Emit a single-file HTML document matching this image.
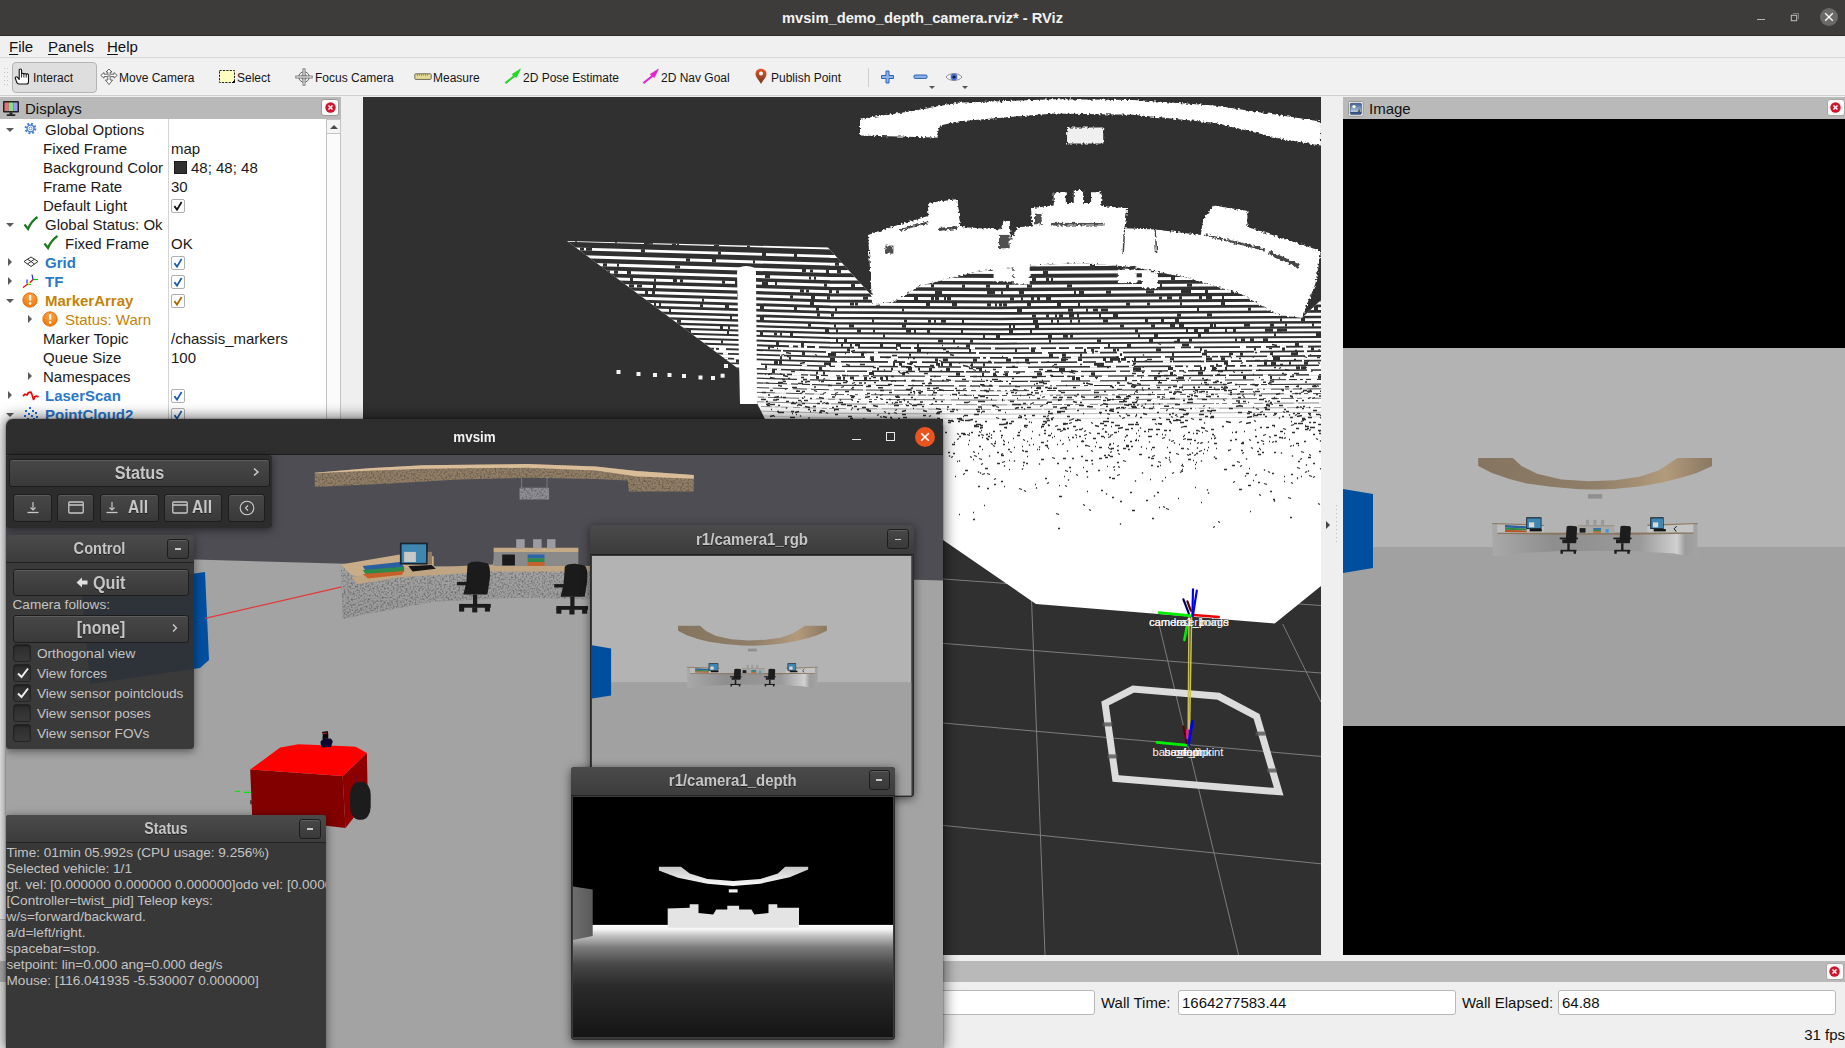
<!DOCTYPE html>
<html>
<head>
<meta charset="utf-8">
<title>mvsim_demo_depth_camera.rviz* - RViz</title>
<style>
html,body{margin:0;padding:0;}
body{width:1845px;height:1048px;overflow:hidden;position:relative;background:#efefef;font-family:"Liberation Sans",sans-serif;color:#1a1a1a;}
.abs{position:absolute;}
div,span{box-sizing:border-box;}
/* ---------- title bar ---------- */
#titlebar{left:0;top:0;width:1845px;height:36px;background:#3d3c3a;border-bottom:1px solid #2c2b29;}
#titlebar .t{left:0;width:1845px;top:10px;text-align:center;font-weight:bold;font-size:14.7px;color:#f2f2f2;line-height:17px;}
/* ---------- menu bar ---------- */
#menubar{left:0;top:36px;width:1845px;height:22px;background:#f0f0f0;border-bottom:1px solid #d9d9d9;}
#menubar span{position:absolute;top:1px;font-size:15px;line-height:19px;color:#111;}
#menubar u{text-decoration-thickness:1px;text-underline-offset:2px;}
/* ---------- toolbar ---------- */
#toolbar{left:0;top:59px;width:1845px;height:37px;background:#f1f1f1;border-bottom:1px solid #cfcfcf;}
.tb{position:absolute;top:12px;font-size:12px;line-height:14px;color:#161616;white-space:pre;}
.tbi{position:absolute;}
/* ---------- displays panel ---------- */
#disp-head{left:0;top:97px;width:341px;height:23px;background:#b9b9b9;}
#disp-tree{left:0;top:119px;width:341px;height:300px;background:#fff;overflow:hidden;}
.row{position:absolute;left:0;height:19px;font-size:15px;line-height:19px;white-space:pre;color:#1a1a1a;}
.row span{position:absolute;top:0;}
.blue{color:#2a78c9;font-weight:bold;}
.warn{color:#c4830a;}
.b{font-weight:bold;}
.cb{position:absolute;width:14px;height:14px;border:1px solid #b0b0b0;border-radius:2px;background:#fff;}
.arr-d{position:absolute;width:0;height:0;border-left:4px solid transparent;border-right:4px solid transparent;border-top:4px solid #5a5a5a;}
.arr-r{position:absolute;width:0;height:0;border-top:4px solid transparent;border-bottom:4px solid transparent;border-left:4px solid #5a5a5a;}
.fld{top:990px;height:25px;background:#fff;border:1px solid #b8b8b8;border-radius:3px;font-size:15px;line-height:23px;padding-left:3px;color:#111;white-space:pre;}
.tl{top:993px;font-size:15px;line-height:19px;color:#111;white-space:pre;}
.nb{font-weight:bold;color:#c6c6c6;white-space:pre;text-shadow:0 1px 0 rgba(0,0,0,0.5);}
.nt{font-size:13.600px;line-height:17px;color:#c4c4c4;white-space:pre;}
</style>
</head>
<body>
<!-- TITLE BAR -->
<div id="titlebar" class="abs">
  <div class="t abs">mvsim_demo_depth_camera.rviz* - RViz</div>
  <div class="abs" style="left:1757px;top:19px;width:8px;height:1px;background:#b4b4b4"></div>
  <svg class="abs" style="left:1790px;top:12px" width="10" height="10" viewBox="0 0 10 10"><path d="M3 1.500H8.500V7" fill="none" stroke="#8e8e8c" stroke-width="0.8"/><rect x="1.300" y="3.300" width="5.400" height="5.400" fill="none" stroke="#c0c0be" stroke-width="1"/></svg>
  <svg class="abs" style="left:1819px;top:7px" width="20" height="20" viewBox="0 0 20 20"><circle cx="10" cy="10" r="9" fill="#6b6a68"/><path d="M6.200 6.200L13.800 13.800M13.800 6.200L6.200 13.800" stroke="#fff" stroke-width="1.300"/></svg>
</div>
<!-- MENU BAR -->
<div id="menubar" class="abs">
  <span style="left:9px"><u>F</u>ile</span>
  <span style="left:48px"><u>P</u>anels</span>
  <span style="left:107px"><u>H</u>elp</span>
</div>
<!-- TOOLBAR -->
<div id="toolbar" class="abs">
  <!-- grip -->
  <svg class="tbi" style="left:3px;top:9px" width="6" height="18" viewBox="0 0 6 18"><g fill="#c4c4c4"><rect x="1" y="0" width="1" height="1"/><rect x="4" y="0" width="1" height="1"/><rect x="1" y="4" width="1" height="1"/><rect x="4" y="4" width="1" height="1"/><rect x="1" y="8" width="1" height="1"/><rect x="4" y="8" width="1" height="1"/><rect x="1" y="12" width="1" height="1"/><rect x="4" y="12" width="1" height="1"/><rect x="1" y="16" width="1" height="1"/><rect x="4" y="16" width="1" height="1"/></g></svg>
  <!-- interact button -->
  <div class="abs" style="left:12px;top:3px;width:85px;height:31px;background:#dedede;border:1px solid #b4b4b4;border-radius:4px;"></div>
  <svg class="tbi" style="left:14px;top:9px" width="18" height="18" viewBox="0 0 18 18"><path d="M5.2 9.5 V2.2 a1.2 1.2 0 0 1 2.4 0 V6.3 a1.1 1.1 0 0 1 2.3 0.2 a1.1 1.1 0 0 1 2.3 0.3 a1.1 1.1 0 0 1 2.3 0.4 V14 a2 2 0 0 1 -2 2 H5 a2.4 2.4 0 0 1 -2.2 -1.4 L1.3 10.3 a1.2 1.2 0 0 1 2 -1.2 L5.2 11.5 Z" fill="#fff" stroke="#111" stroke-width="1.1" stroke-linejoin="round"/><path d="M7.6 6.3V9.5M9.9 6.6V9.5M12.2 7V9.7" stroke="#111" stroke-width="0.9" fill="none"/></svg>
  <span class="tb" style="left:33px">Interact</span>
  <!-- move camera -->
  <svg class="tbi" style="left:100px;top:9px" width="18" height="18" viewBox="0 0 18 18"><g fill="#fff" stroke="#555" stroke-width="0.9" stroke-linejoin="round"><path d="M9 1 L12 4 H10.2 V6.2 H14 V4.6 L17.2 7.4 L14 10.2 V8.6 H10.2 V12 H12.6 L9 16.6 L5.4 12 H7.8 V8.6 H4 V10.2 L0.8 7.4 L4 4.6 V6.2 H7.8 V4 H6 Z"/></g><circle cx="9" cy="7.4" r="1.6" fill="#aaa"/></svg>
  <span class="tb" style="left:119px">Move Camera</span>
  <!-- select -->
  <svg class="tbi" style="left:218px;top:10px" width="18" height="16" viewBox="0 0 18 16"><rect x="1.5" y="1.5" width="15" height="12" fill="#ffffc0" stroke="#222" stroke-width="1" stroke-dasharray="2.2 1.2"/><path d="M16.5 11.5V13.5H14.5Z" fill="#000" stroke="#000" stroke-width="1"/></svg>
  <span class="tb" style="left:237px">Select</span>
  <!-- focus camera -->
  <svg class="tbi" style="left:295px;top:9px" width="18" height="18" viewBox="0 0 18 18"><g fill="none" stroke="#666" stroke-width="1"><circle cx="9" cy="9" r="5.2"/><circle cx="9" cy="9" r="2.6"/></g><g fill="#f4f4f4" stroke="#666" stroke-width="0.8"><rect x="8" y="0.8" width="2" height="16.4"/><rect x="0.8" y="8" width="16.4" height="2"/></g></svg>
  <span class="tb" style="left:315px">Focus Camera</span>
  <!-- measure -->
  <svg class="tbi" style="left:414px;top:14px" width="18" height="8" viewBox="0 0 18 8"><rect x="0.8" y="0.8" width="16.4" height="5.6" rx="1" fill="#e9dc9a" stroke="#6b6b5a" stroke-width="1"/><path d="M3.5 1.2v2M5.5 1.2v1.5M7.5 1.2v2M9.5 1.2v1.5M11.5 1.2v2M13.5 1.2v1.5" stroke="#7a744f" stroke-width="0.7"/></svg>
  <span class="tb" style="left:433px">Measure</span>
  <!-- 2d pose estimate -->
  <svg class="tbi" style="left:504px;top:9px" width="18" height="18" viewBox="0 0 18 18"><path d="M1 14.5 L9.5 7.8 L8.2 6.3 L16.5 1 L12.3 9.6 L11 8.6 L2 15.6 Z" fill="#1be31b" stroke="#14a814" stroke-width="0.5"/></svg>
  <span class="tb" style="left:523px">2D Pose Estimate</span>
  <!-- 2d nav goal -->
  <svg class="tbi" style="left:642px;top:9px" width="18" height="18" viewBox="0 0 18 18"><path d="M1 14.5 L9.5 7.8 L8.2 6.3 L16.5 1 L12.3 9.6 L11 8.6 L2 15.6 Z" fill="#f01ed8" stroke="#c012ac" stroke-width="0.5"/></svg>
  <span class="tb" style="left:661px">2D Nav Goal</span>
  <!-- publish point -->
  <svg class="tbi" style="left:754px;top:9px" width="14" height="17" viewBox="0 0 14 17"><defs><linearGradient id="pg" x1="0" y1="0" x2="0" y2="1"><stop offset="0" stop-color="#e5532b"/><stop offset="1" stop-color="#6e3a1c"/></linearGradient></defs><path d="M7 0.8 C3.6 0.8 1.5 3.2 1.5 6 C1.5 9.5 5.5 12.5 7 16 C8.5 12.5 12.5 9.5 12.5 6 C12.5 3.2 10.4 0.8 7 0.8 Z" fill="url(#pg)"/><circle cx="7" cy="5.6" r="2" fill="#fff"/></svg>
  <span class="tb" style="left:771px">Publish Point</span>
  <!-- separator -->
  <div class="abs" style="left:868px;top:9px;width:1px;height:19px;background:#cfcfcf;"></div>
  <!-- plus -->
  <svg class="tbi" style="left:880px;top:11px" width="15" height="14" viewBox="0 0 15 14"><path d="M6 1H9V5.5H13.5V8.5H9V13H6V8.5H1.5V5.500H6Z" fill="#8db2e6" stroke="#2f63b5" stroke-width="1" stroke-linejoin="round"/></svg>
  <!-- minus -->
  <svg class="tbi" style="left:913px;top:15px" width="15" height="6" viewBox="0 0 15 6"><rect x="1" y="1" width="13" height="3.4" rx="1" fill="#8db2e6" stroke="#2f63b5" stroke-width="1"/></svg>
  <div class="abs" style="left:929px;top:27px;width:0;height:0;border-left:3px solid transparent;border-right:3px solid transparent;border-top:3px solid #555;"></div>
  <!-- eye -->
  <svg class="tbi" style="left:945px;top:12px" width="18" height="12" viewBox="0 0 18 12"><path d="M1 6 C4 1.5 14 1.500 17 6 C14 10.5 4 10.5 1 6 Z" fill="#f6f6f6" stroke="#8a8a8a" stroke-width="1"/><circle cx="9" cy="6" r="3.4" fill="#4a6fd0"/><circle cx="9" cy="6" r="1.6" fill="#0f1c4d"/></svg>
  <div class="abs" style="left:962px;top:27px;width:0;height:0;border-left:3px solid transparent;border-right:3px solid transparent;border-top:3px solid #555;"></div>
</div>
<!-- DISPLAYS -->
<div id="disp-head" class="abs">
  <svg class="abs" style="left:2px;top:3px" width="18" height="17" viewBox="0 0 18 17"><rect x="1" y="1" width="16" height="11.500" rx="1" fill="#222"/><rect x="2.5" y="2.500" width="4.400" height="8.500" fill="#d77"/><rect x="6.900" y="2.500" width="4.300" height="8.500" fill="#8d8"/><rect x="11.200" y="2.500" width="4.300" height="8.500" fill="#99e"/><rect x="7.500" y="12.500" width="3" height="2" fill="#222"/><rect x="4.500" y="14.300" width="9" height="1.600" rx="0.8" fill="#222"/></svg>
  <div class="abs" style="left:25px;top:2px;font-size:15px;line-height:19px;color:#111">Displays</div>
  <div class="abs" style="left:321px;top:2px;width:18px;height:17px;background:#fafafa;border:1px solid #9a9a9a;border-radius:3px"></div>
  <svg class="abs" style="left:324.500px;top:5px" width="11" height="11" viewBox="0 0 11 11"><circle cx="5.500" cy="5.500" r="5.200" fill="#d0152a"/><path d="M3.500 3.500 L7.500 7.500 M7.500 3.500 L3.500 7.500" stroke="#fff" stroke-width="1.500"/></svg>
</div>
<div id="disp-tree" class="abs">
<div class="abs" style="left:168px;top:0;width:1px;height:300px;background:#d4d4d4"></div>
<div class="abs" style="left:326px;top:0;width:15px;height:300px;background:#fbfbfb;border-left:1px solid #c4c4c4;border-right:1px solid #c4c4c4"></div>
<div class="abs" style="left:326px;top:0;width:15px;height:15px;background:#f4f4f4;border:1px solid #c4c4c4"></div>
<div class="abs" style="left:329.500px;top:5.500px;width:0;height:0;border-left:4px solid transparent;border-right:4px solid transparent;border-bottom:4px solid #4a4a4a"></div>
<div class="arr-d" style="left:6px;top:9px"></div>
<svg class="abs" style="left:23px;top:2px" width="15" height="15" viewBox="0 0 15 15"><g fill="none" stroke="#4a82d4"><circle cx="7.5" cy="7.5" r="4.6" stroke-width="2.6" stroke-dasharray="1.8 1.81"/><circle cx="7.5" cy="7.5" r="3.4" stroke-width="1.3"/></g><circle cx="7.5" cy="7.5" r="1.5" fill="#fff" stroke="#4a82d4" stroke-width="0.8"/></svg>
<div class="row " style="left:45px;top:1px">Global Options</div>
<div class="row " style="left:43px;top:20px">Fixed Frame</div>
<div class="row " style="left:171px;top:20px">map</div>
<div class="row " style="left:43px;top:39px">Background Color</div>
<div class="abs" style="left:174px;top:42px;width:13px;height:13px;background:#303030;border:1px solid #1a1a1a"></div>
<div class="row " style="left:191px;top:39px">48; 48; 48</div>
<div class="row " style="left:43px;top:58px">Frame Rate</div>
<div class="row " style="left:171px;top:58px">30</div>
<div class="row " style="left:43px;top:77px">Default Light</div>
<div class="cb" style="left:171px;top:80px"><svg width="12" height="12" viewBox="0 0 11 11" style="position:absolute;left:0;top:0"><path d="M2.2 5.600 L4.6 8.8 L8.8 1.8" fill="none" stroke="#111" stroke-width="1.6"/></svg></div>
<div class="arr-d" style="left:6px;top:104px"></div>
<svg class="abs" style="left:23px;top:97px" width="16" height="15" viewBox="0 0 16 15"><path d="M1.5 8.5 L5 13 C7 8 10 4 14.5 1" fill="none" stroke="#1d7a1d" stroke-width="2.2"/></svg>
<div class="row " style="left:45px;top:96px">Global Status: Ok</div>
<svg class="abs" style="left:43px;top:116px" width="16" height="15" viewBox="0 0 16 15"><path d="M1.5 8.5 L5 13 C7 8 10 4 14.5 1" fill="none" stroke="#1d7a1d" stroke-width="2.2"/></svg>
<div class="row " style="left:65px;top:115px">Fixed Frame</div>
<div class="row " style="left:171px;top:115px">OK</div>
<div class="arr-r" style="left:8px;top:139px"></div>
<svg class="abs" style="left:23px;top:137px" width="16" height="12" viewBox="0 0 16 12"><g fill="none" stroke="#333" stroke-width="1"><path d="M8 1 L15 5.500 L8 10.5 L1 5.500 Z"/><path d="M4.5 3.2 L11.5 8 M11.5 3.2 L4.5 8"/></g></svg>
<div class="row blue" style="left:45px;top:134px">Grid</div>
<div class="cb" style="left:171px;top:137px"><svg width="12" height="12" viewBox="0 0 11 11" style="position:absolute;left:0;top:0"><path d="M2.2 5.600 L4.6 8.8 L8.8 1.8" fill="none" stroke="#1c5fa8" stroke-width="1.6"/></svg></div>
<div class="arr-r" style="left:8px;top:158px"></div>
<svg class="abs" style="left:22px;top:154px" width="18" height="16" viewBox="0 0 18 16"><g fill="none" stroke-width="1.2"><path d="M1 14.5 L6 11" stroke="#e00"/><path d="M6 11 L9 11.500" stroke="#0c0"/><path d="M5 6.500 L5 10.500" stroke="#22e"/><path d="M6 11 L8 9.500" stroke="#ee0"/><path d="M8 9.500 L11 6.500" stroke="#e00"/><path d="M11 6.500 L16 6.500" stroke="#0c0"/><path d="M11 6.500 L10 1.500" stroke="#22e"/></g></svg>
<div class="row blue" style="left:45px;top:153px">TF</div>
<div class="cb" style="left:171px;top:156px"><svg width="12" height="12" viewBox="0 0 11 11" style="position:absolute;left:0;top:0"><path d="M2.2 5.600 L4.6 8.8 L8.8 1.8" fill="none" stroke="#1c5fa8" stroke-width="1.6"/></svg></div>
<div class="arr-d" style="left:6px;top:180px"></div>
<svg class="abs" style="left:22px;top:173px" width="16" height="16" viewBox="0 0 16 16"><defs><radialGradient id="wg1" cx="0.5" cy="0.3" r="0.7"><stop offset="0" stop-color="#ffa64a"/><stop offset="1" stop-color="#ee7608"/></radialGradient></defs><circle cx="8" cy="8" r="7.2" fill="url(#wg1)" stroke="#d86a06" stroke-width="0.8"/><rect x="7" y="3" width="2.2" height="5.8" rx="1" fill="#fff"/><circle cx="8.1" cy="11.4" r="1.3" fill="#fff"/></svg>
<div class="row warn b" style="left:45px;top:172px">MarkerArray</div>
<div class="cb" style="left:171px;top:175px"><svg width="12" height="12" viewBox="0 0 11 11" style="position:absolute;left:0;top:0"><path d="M2.2 5.600 L4.6 8.8 L8.8 1.8" fill="none" stroke="#a86a00" stroke-width="1.6"/></svg></div>
<div class="arr-r" style="left:28px;top:196px"></div>
<svg class="abs" style="left:42px;top:192px" width="16" height="16" viewBox="0 0 16 16"><defs><radialGradient id="wg2" cx="0.5" cy="0.3" r="0.7"><stop offset="0" stop-color="#ffa64a"/><stop offset="1" stop-color="#ee7608"/></radialGradient></defs><circle cx="8" cy="8" r="7.2" fill="url(#wg2)" stroke="#d86a06" stroke-width="0.8"/><rect x="7" y="3" width="2.2" height="5.8" rx="1" fill="#fff"/><circle cx="8.1" cy="11.4" r="1.3" fill="#fff"/></svg>
<div class="row warn" style="left:65px;top:191px">Status: Warn</div>
<div class="row " style="left:43px;top:210px">Marker Topic</div>
<div class="row " style="left:171px;top:210px">/chassis_markers</div>
<div class="row " style="left:43px;top:229px">Queue Size</div>
<div class="row " style="left:171px;top:229px">100</div>
<div class="arr-r" style="left:28px;top:253px"></div>
<div class="row " style="left:43px;top:248px">Namespaces</div>
<div class="arr-r" style="left:8px;top:272px"></div>
<svg class="abs" style="left:22px;top:272px" width="18" height="10" viewBox="0 0 18 10"><path d="M1 5 L3 3.200 L5 4 L6.500 1.500 L9 1.200 L10.500 5 L11.500 8.500 L13 5.500 L14.500 5 L16.500 6" fill="none" stroke="#f00000" stroke-width="1.7" stroke-linejoin="round"/></svg>
<div class="row blue" style="left:45px;top:267px">LaserScan</div>
<div class="cb" style="left:171px;top:270px"><svg width="12" height="12" viewBox="0 0 11 11" style="position:absolute;left:0;top:0"><path d="M2.2 5.600 L4.6 8.8 L8.8 1.8" fill="none" stroke="#1c5fa8" stroke-width="1.6"/></svg></div>
<div class="arr-d" style="left:6px;top:294px"></div>
<svg class="abs" style="left:23px;top:288px" width="16" height="14" viewBox="0 0 16 14"><g fill="#1e6fe0"><rect x="6" y="0" width="2" height="2"/><rect x="2" y="3" width="2" height="2"/><rect x="9" y="3" width="2" height="2"/><rect x="12" y="5" width="2" height="2"/><rect x="5" y="6" width="2" height="2"/><rect x="1" y="8" width="2" height="2"/><rect x="8" y="8" width="2" height="2"/><rect x="13" y="9" width="2" height="2"/><rect x="4" y="11" width="2" height="2"/><rect x="10" y="11" width="2" height="2"/></g></svg>
<div class="row blue" style="left:45px;top:286px">PointCloud2</div>
<div class="cb" style="left:171px;top:289px"><svg width="12" height="12" viewBox="0 0 11 11" style="position:absolute;left:0;top:0"><path d="M2.2 5.600 L4.6 8.8 L8.8 1.8" fill="none" stroke="#1c5fa8" stroke-width="1.6"/></svg></div>
</div>
<!-- VIEW3D-START -->
<svg id="view3d" class="abs" style="left:363px;top:97px" width="958" height="858" viewBox="0 0 958 858">
<rect width="958" height="858" fill="#303030"/>
<g stroke="#7d7d7d" stroke-width="1" fill="none">
<path d="M580.0 482.0L958.0 508.5"/>
<path d="M580.0 546.4L958.0 576.0"/>
<path d="M580.0 626.0L958.0 659.4"/>
<path d="M580.0 728.4L958.0 766.8"/>
<path d="M668.4 499.0L682.0 858.0"/>
<path d="M795.4 525.0L875.6 858.0"/>
<path d="M919.7 527.0L958.0 605.0"/>
</g>
<defs><filter id="rough" x="-2%" y="-5%" width="104%" height="110%"><feTurbulence type="fractalNoise" baseFrequency="0.45" numOctaves="1" seed="4" result="n"/><feDisplacementMap in="SourceGraphic" in2="n" scale="5" xChannelSelector="R" yChannelSelector="G"/></filter></defs>
<defs><clipPath id="fclip"><polygon points="204.0,144.0 465.0,150.5 509.0,199.0 509.0,207.0 530.4,204.7 557.0,188.7 610.6,175.3 664.0,168.6 717.4,166.0 770.9,170.0 824.3,180.7 877.7,196.7 915.0,218.0 939.0,220.7 958.0,203.0 958.0,489.0 911.7,526.4 673.0,507.0 580.0,443.0 580.0,322.0 402.0,322.0 394.0,306.0 377.0,306.0 377.0,273.0"/></clipPath></defs>
<polygon points="204.0,144.0 465.0,150.5 509.0,199.0 509.0,207.0 530.4,204.7 557.0,188.7 610.6,175.3 664.0,168.6 717.4,166.0 770.9,170.0 824.3,180.7 877.7,196.7 915.0,218.0 939.0,220.7 958.0,203.0 958.0,489.0 911.7,526.4 673.0,507.0 580.0,443.0 580.0,322.0 402.0,322.0 394.0,306.0 377.0,306.0 377.0,273.0" fill="#fff"/>
<g clip-path="url(#fclip)" stroke="#303030" fill="none">
<path d="M197 147.3L467 155.3L637 156.3L962 154.3" stroke-width="5.44"/>
<path d="M197 155.2L467 163.2L637 164.2L962 162.2" stroke-width="4.88"/>
<path d="M197 162.8L467 170.8L637 171.8L962 169.8" stroke-width="4.36"/>
<path d="M197 170.1L467 178.1L637 179.1L962 177.1" stroke-width="3.97"/>
<path d="M197 177.0L467 185.0L637 186.0L962 184.0" stroke-width="3.70"/>
<path d="M197 183.5L467 191.5L637 192.5L962 190.5" stroke-width="3.45"/>
<path d="M197 189.9L467 197.9L637 198.9L962 196.9" stroke-width="3.22"/>
<path d="M197 195.9L467 203.9L637 204.9L962 202.9" stroke-width="3.01"/>
<path d="M197 201.8L467 209.8L637 210.8L962 208.8" stroke-width="2.84"/>
<path d="M197 207.4L467 215.4L637 216.4L962 214.4" stroke-width="2.69"/>
<path d="M197 212.9L467 220.9L637 221.9L962 219.9" stroke-width="2.55"/>
<path d="M197 218.2L467 226.2L637 227.2L962 225.2" stroke-width="2.41"/>
<path d="M197 223.3L467 231.3L637 232.3L962 230.3" stroke-width="2.28"/>
<path d="M197 228.2L467 236.2L637 237.2L962 235.2" stroke-width="2.16"/>
<path d="M197 233.0L467 241.0L637 242.0L962 240.0" stroke-width="2.02"/>
<path d="M197 237.7L467 245.7L637 246.7L962 244.7" stroke-width="1.94"/>
<path d="M197 242.5L467 250.5L637 251.5L962 249.5" stroke-width="1.86"/>
<path d="M197 247.2L467 255.2L637 256.2L962 254.2" stroke-width="1.78"/>
<path d="M197 251.9L467 259.9L637 260.9L962 258.9" stroke-width="1.70"/>
<path d="M197 256.6L467 264.6L637 265.6L962 263.6" stroke-width="1.63"/>
<path d="M197 261.3L467 269.3L637 270.3L962 268.3" stroke-width="1.55"/>
<path d="M197 266.0L467 274.0L637 275.0L962 273.0" stroke-width="1.43"/>
<path d="M197 270.7L467 278.7L637 279.7L962 277.7" stroke-width="1.31"/>
<path d="M197 275.4L467 283.4L637 284.4L962 282.4" stroke-width="1.19"/>
<path d="M197 280.1L467 288.1L637 289.1L962 287.1" stroke-width="1.07"/>
<path d="M197 284.8L467 292.8L637 293.8L962 291.8" stroke-width="0.96"/>
<path d="M197 289.5L467 297.5L637 298.5L962 296.5" stroke-width="0.84"/>
<path d="M197 294.2L467 302.2L637 303.2L962 301.2" stroke-width="0.72"/>
<path d="M197 298.9L467 306.9L637 307.9L962 305.9" stroke-width="0.60"/>
<path d="M197 303.5L467 311.5L637 312.5L962 310.5" stroke-width="0.48"/>
<path d="M197 308.2L467 316.2L637 317.2L962 315.2" stroke-width="0.34"/>
<path d="M197 312.9L467 320.9L637 321.9L962 319.9" stroke-width="0.18"/>
</g>
<path clip-path="url(#fclip)" d="M212 143.7h2M252 144.9h2M281 145.8h3M283 145.8h3M285 145.9h3M288 146.0h2M309 146.6h4M314 146.7h2M351 147.8h5M384 148.8h3M526 151.6h2M600 152.1h3M606 152.1h2M620 152.2h4M628 152.2h4M666 152.1h3M697 151.9h2M699 151.9h2M742 151.6h3M757 151.5h4M780 151.4h3M840 151.0h4M850 151.0h4M879 150.8h5M928 150.5h3M1077 149.6h2" stroke="#303030" stroke-width="3.2" fill="none"/>
<path clip-path="url(#fclip)" d="M217 152.0h4M223 152.2h3M225 152.2h4M278 153.8h4M355 156.1h3M399 157.4h4M431 158.3h3M498 159.6h5M522 159.7h4M524 159.7h4M563 160.0h5M626 160.3h2M644 160.4h4M645 160.3h3M652 160.3h2M654 160.3h4M659 160.3h2M678 160.1h5M681 160.1h3M710 159.9h5M773 159.6h5M785 159.5h3M802 159.4h5M918 158.7h2M926 158.6h2M935 158.6h3M968 158.4h2" stroke="#303030" stroke-width="3.2" fill="none"/>
<path clip-path="url(#fclip)" d="M197 159.2h3M214 159.7h3M323 162.9h4M349 163.7h4M390 164.9h2M472 167.2h4M546 167.6h4M564 167.7h3M568 167.8h4M571 167.8h2M579 167.8h2M594 167.9h2M594 167.9h2M598 167.9h3M599 167.9h5M633 168.1h2M643 168.1h3M659 168.0h2M727 167.6h5M750 167.5h3M753 167.4h2M768 167.4h2M831 167.0h2M832 167.0h5M859 166.8h2M887 166.6h2M914 166.5h5M985 166.0h4" stroke="#303030" stroke-width="3.2" fill="none"/>
<path clip-path="url(#fclip)" d="M208 166.9h3M214 167.1h4M240 167.8h4M254 168.2h2M312 170.0h5M379 171.9h4M439 173.7h4M447 174.0h3M463 174.4h2M464 174.5h2M474 174.6h4M583 175.2h3M680 175.3h5M788 174.6h3M796 174.6h2M804 174.5h2M838 174.3h5M902 173.9h3M939 173.7h4M942 173.7h4M1026 173.2h4" stroke="#303030" stroke-width="3.2" fill="none"/>
<path clip-path="url(#fclip)" d="M244 175.0h3M251 175.2h4M264 175.6h4M385 179.1h3M402 179.7h5M446 181.0h2M451 181.1h2M530 182.0h4M536 182.0h4M669 182.4h4M683 182.3h3M688 182.3h2M808 181.5h4M833 181.4h5M852 181.3h5M911 180.9h2M921 180.8h3M931 180.8h4M941 180.7h3M945 180.7h5M960 180.6h3" stroke="#303030" stroke-width="3.2" fill="none"/>
<path clip-path="url(#fclip)" d="M226 181.2h5M244 181.7h5M267 182.4h3M291 183.1h2M310 183.7h2M310 183.7h4M317 183.9h3M359 185.1h3M372 185.5h3M399 186.3h4M402 186.4h3M412 186.7h2M461 188.1h3M488 188.4h4M568 188.9h3M599 189.1h3M623 189.2h4M643 189.3h3M664 189.1h5M704 188.9h5M797 188.3h2M824 188.2h5M885 187.8h2M889 187.8h3M892 187.7h2M894 187.7h4M944 187.4h5M950 187.4h4M986 187.2h2" stroke="#303030" stroke-width="3.2" fill="none"/>
<path clip-path="url(#fclip)" d="M266 188.8h5M274 189.0h5M290 189.5h3M437 193.9h4M443 194.0h3M466 194.7h3M473 194.8h3M514 195.0h2M540 195.2h3M540 195.2h3M572 195.4h3M574 195.4h5M624 195.7h5M627 195.7h2M628 195.7h4M638 195.8h2M656 195.6h5M711 195.3h2M716 195.3h5M743 195.1h4M746 195.1h2M783 194.9h3M786 194.8h5M818 194.6h4M821 194.6h4M823 194.6h5M842 194.5h3M868 194.3h5M878 194.3h2M902 194.1h2M906 194.1h2M908 194.1h2M919 194.0h3M965 193.7h3" stroke="#303030" stroke-width="3.2" fill="none"/>
<path clip-path="url(#fclip)" d="M219 193.6h2M232 194.0h2M241 194.2h2M282 195.5h3M289 195.7h3M374 198.2h2M427 199.8h3M448 200.4h4M464 200.8h3M500 201.1h5M513 201.2h4M551 201.4h4M568 201.5h3M569 201.5h2M572 201.6h4M581 201.6h2M584 201.6h4M647 201.9h4M658 201.8h2M668 201.7h3M674 201.7h3M683 201.7h5M796 201.0h3M804 200.9h5M816 200.8h3M816 200.8h3M836 200.7h3M843 200.7h3M843 200.7h2M846 200.7h3M847 200.6h2M859 200.6h2M886 200.4h3M929 200.1h4M969 199.9h5" stroke="#303030" stroke-width="3.2" fill="none"/>
<path clip-path="url(#fclip)" d="M212 199.3h3M339 203.1h2M378 204.2h4M379 204.3h4M447 206.3h4M487 207.0h4M492 207.0h3M513 207.1h4M563 207.4h4M589 207.6h5M624 207.8h4M632 207.8h2M636 207.9h3M640 207.9h4M664 207.7h4M694 207.5h4M715 207.4h2M763 207.1h4M784 207.0h3M817 206.8h2M858 206.5h2M860 206.5h2M900 206.3h2M941 206.0h5M961 205.9h3" stroke="#303030" stroke-width="3.2" fill="none"/>
<path clip-path="url(#fclip)" d="M217 205.2h4M260 206.5h4M291 207.4h2M296 207.5h2M337 208.8h3M362 209.5h2M364 209.6h2M397 210.6h4M431 211.6h3M453 212.2h3M472 212.6h2M539 213.0h2M654 213.5h5M654 213.5h3M705 213.2h5M723 213.1h2M730 213.0h5M738 213.0h4M742 213.0h3M834 212.4h2M885 212.1h3M951 211.7h4M958 211.6h5" stroke="#303030" stroke-width="3.2" fill="none"/>
<path clip-path="url(#fclip)" d="M217 210.8h2M217 210.8h3M235 211.3h3M240 211.4h3M251 211.8h4M251 211.8h4M306 213.4h2M384 215.7h4M454 217.8h3M468 218.2h3M669 219.0h4M683 218.9h3M692 218.8h2M696 218.8h4M706 218.7h5M714 218.7h2M736 218.6h2M750 218.5h5M814 218.1h4M844 217.9h5M929 217.4h3M967 217.1h2" stroke="#303030" stroke-width="3.2" fill="none"/>
<path clip-path="url(#fclip)" d="M237 216.7h3M278 218.0h4M289 218.3h2M367 220.6h2M386 221.1h3M397 221.5h4M509 223.8h2M541 224.0h3M565 224.1h3M571 224.2h2M578 224.2h5M599 224.3h2M670 224.3h5M688 224.2h2M694 224.2h2M707 224.1h2M715 224.1h2M740 223.9h5M782 223.7h3M798 223.6h3M812 223.5h3M814 223.5h2M917 222.8h2M938 222.7h4M997 222.3h2" stroke="#303030" stroke-width="3.2" fill="none"/>
<path clip-path="url(#fclip)" d="M206 221.0h2M222 221.5h3M314 224.2h4M376 226.0h2M377 226.1h4M445 228.1h3M471 228.8h2M486 228.9h5M539 229.2h4M646 229.7h2M650 229.7h2M672 229.5h4M757 229.0h4M788 228.8h4M807 228.7h3M808 228.7h4M816 228.6h5M847 228.4h3M851 228.4h2M881 228.2h4M885 228.2h2M907 228.1h4M922 228.0h2M949 227.8h2M960 227.7h3" stroke="#303030" stroke-width="3.2" fill="none"/>
<path clip-path="url(#fclip)" d="M293 228.6h4M357 230.5h3M365 230.7h2M462 233.6h4M473 233.8h2M494 233.9h4M510 234.0h2M543 234.2h5M551 234.3h2M564 234.3h3M598 234.5h2M646 234.7h4M667 234.6h2M772 233.9h3M823 233.6h2M831 233.6h4M841 233.5h5M862 233.4h2M870 233.3h3M902 233.1h5M907 233.1h3M914 233.1h5M919 233.0h2M921 233.0h3M989 232.6h5" stroke="#303030" stroke-width="3.2" fill="none"/>
<path clip-path="url(#fclip)" d="M237 231.8h5M317 234.2h3M323 234.4h5M364 235.6h2M397 236.6h3M411 237.0h3M417 237.1h2M427 237.4h3M520 238.9h2M620 239.5h2M633 239.6h4M685 239.3h3M686 239.3h3M700 239.2h5M707 239.2h3M775 238.8h2M791 238.7h4M835 238.4h2M836 238.4h2M911 237.9h2M953 237.7h5M965 237.6h2" stroke="#303030" stroke-width="3.2" fill="none"/>
<path clip-path="url(#fclip)" d="M292 238.2h4M301 238.5h4M312 238.8h2M313 238.8h4M387 241.0h4M473 243.4h2M481 243.5h3M575 244.0h5M590 244.1h2M607 244.2h3M686 244.1h2M734 243.8h4M786 243.5h4M814 243.3h3M826 243.2h3M872 242.9h2M878 242.9h4M887 242.8h2M888 242.8h3M900 242.8h5M964 242.4h5" stroke="#303030" stroke-width="3.2" fill="none"/>
<path clip-path="url(#fclip)" d="M206 240.4h2M209 240.5h3M246 241.6h3M254 241.8h3M283 242.7h4M325 243.9h4M358 244.9h2M413 246.5h3M438 247.3h3M478 248.2h2M487 248.2h2M492 248.3h5M517 248.4h3M533 248.5h5M554 248.6h2M603 248.9h4M745 248.5h2M764 248.3h4M819 248.0h5M820 248.0h3M824 248.0h2M932 247.3h4M1012 246.8h3" stroke="#303030" stroke-width="3.2" fill="none"/>
<path clip-path="url(#fclip)" d="M272 244.7h4M283 245.0h5M392 248.2h2M426 249.2h4M435 249.5h3M441 249.7h3M452 250.0h4M491 250.6h3M492 250.6h3M534 250.9h3M548 250.9h3M607 251.3h4M610 251.3h2M628 251.4h4M666 251.3h2M673 251.2h5M693 251.1h3M706 251.0h6M720 250.9h4M737 250.8h4M812 250.4h6M828 250.3h3M877 250.0h3M877 250.0h6M898 249.9h5M917 249.7h6M940 249.6h3M941 249.6h4M979 249.4h6" stroke="#fff" stroke-width="2.5" fill="none"/>
<path clip-path="url(#fclip)" d="M200 244.9h4M214 245.3h3M218 245.5h2M241 246.1h5M244 246.2h3M293 247.7h5M300 247.9h2M386 250.4h5M405 251.0h2M484 252.9h3M554 253.4h4M606 253.7h2M652 253.7h2M668 253.7h4M721 253.3h2M728 253.3h3M750 253.1h3M754 253.1h2M793 252.9h5M794 252.9h3M837 252.6h2M891 252.3h2M919 252.1h3M948 251.9h3M965 251.8h4" stroke="#303030" stroke-width="3.2" fill="none"/>
<path clip-path="url(#fclip)" d="M216 247.7h5M236 248.3h4M237 248.4h4M260 249.0h3M309 250.5h5M329 251.1h3M351 251.7h2M356 251.9h4M359 252.0h4M383 252.7h2M418 253.7h2M463 255.1h5M487 255.3h2M511 255.4h4M613 256.0h3M679 255.9h6M724 255.6h5M731 255.6h6M754 255.5h6M838 254.9h3M891 254.6h6M893 254.6h3M941 254.3h3M1018 253.8h3" stroke="#fff" stroke-width="2.4" fill="none"/>
<path clip-path="url(#fclip)" d="M248 251.1h2M269 251.7h5M276 251.9h2M297 252.5h3M298 252.5h2M303 252.7h5M337 253.7h5M343 253.9h4M347 254.0h3M377 254.9h3M439 256.7h3M465 257.5h5M468 257.6h5M498 257.7h3M546 258.0h2M686 258.3h4M699 258.2h4M717 258.1h2M757 257.8h2M809 257.5h2M839 257.3h5M866 257.2h4M877 257.1h2M878 257.1h2M907 256.9h3M928 256.8h5M933 256.7h2M964 256.5h2" stroke="#303030" stroke-width="3.2" fill="none"/>
<path clip-path="url(#fclip)" d="M197 251.9h3M201 252.0h3M208 252.2h4M235 253.0h3M265 253.9h4M270 254.1h6M278 254.3h3M281 254.4h5M344 256.3h5M360 256.7h3M360 256.7h5M386 257.5h3M417 258.4h4M502 260.1h5M511 260.2h6M512 260.2h4M528 260.3h3M530 260.3h5M530 260.3h4M617 260.8h3M623 260.8h4M645 260.8h5M696 260.5h3M708 260.5h3M709 260.5h6M756 260.2h5M756 260.2h5M798 259.9h4M839 259.7h4M847 259.6h2M855 259.6h2M868 259.5h5M904 259.3h5M942 259.0h3M967 258.9h4" stroke="#fff" stroke-width="2.3" fill="none"/>
<path clip-path="url(#fclip)" d="M244 255.7h3M253 255.9h4M354 258.9h2M417 260.8h2M426 261.1h2M467 262.3h5M508 262.5h3M572 262.9h3M580 262.9h5M610 263.1h4M643 263.2h5M662 263.1h4M698 262.9h5M715 262.8h4M740 262.6h3M747 262.6h4M750 262.6h5M755 262.5h2M758 262.5h5M771 262.4h2M771 262.4h2M807 262.2h4M843 262.0h4M845 262.0h4M858 261.9h4M910 261.6h5M912 261.6h5M985 261.1h5" stroke="#303030" stroke-width="3.2" fill="none"/>
<path clip-path="url(#fclip)" d="M200 256.7h3M203 256.8h2M255 258.3h5M282 259.1h5M309 259.9h3M312 260.0h2M351 261.2h3M361 261.5h4M362 261.5h3M371 261.7h5M383 262.1h3M474 264.6h4M525 264.9h4M526 265.0h4M542 265.0h5M554 265.1h5M575 265.2h3M629 265.6h2M675 265.4h3M675 265.4h3M714 265.1h6M714 265.1h4M733 265.0h5M738 265.0h4M750 264.9h5M758 264.9h6M767 264.8h3M800 264.6h4M803 264.6h5M805 264.6h5M838 264.4h5M865 264.2h3M879 264.1h4M939 263.7h2M999 263.4h2" stroke="#fff" stroke-width="2.2" fill="none"/>
<path clip-path="url(#fclip)" d="M204 259.2h2M273 261.2h3M288 261.7h5M296 261.9h3M318 262.6h4M360 263.8h4M373 264.2h3M378 264.3h4M411 265.3h4M416 265.5h3M461 266.8h4M465 266.9h3M530 267.3h2M536 267.4h3M573 267.6h4M578 267.6h2M586 267.7h3M608 267.8h2M620 267.9h2M731 267.4h4M734 267.4h5M738 267.4h3M861 266.6h4M901 266.4h3M908 266.3h4M911 266.3h2M926 266.2h2M941 266.1h4M976 265.9h3" stroke="#303030" stroke-width="3.2" fill="none"/>
<path clip-path="url(#fclip)" d="M221 262.0h4M225 262.1h4M237 262.5h5M294 264.2h4M314 264.8h5M327 265.2h3M358 266.1h6M393 267.1h5M439 268.5h5M463 269.2h4M472 269.3h5M475 269.4h4M511 269.6h5M535 269.7h3M548 269.8h4M571 269.9h4M598 270.1h6M603 270.1h5M639 270.3h4M655 270.2h6M656 270.2h4M660 270.2h5M727 269.8h4M730 269.7h4M748 269.6h5M766 269.5h5M808 269.3h4M820 269.2h6M826 269.1h5M838 269.1h5M841 269.1h6M851 269.0h2M859 268.9h4M859 268.9h4M872 268.9h5M883 268.8h3M889 268.8h5M956 268.3h4M962 268.3h5" stroke="#fff" stroke-width="2.1" fill="none"/>
<path clip-path="url(#fclip)" d="M212 264.1h2M216 264.3h4M267 265.8h4M286 266.3h3M294 266.6h5M307 266.9h4M359 268.5h4M378 269.1h3M402 269.8h2M456 271.4h3M514 272.0h2M528 272.1h2M545 272.2h2M545 272.2h4M555 272.2h2M566 272.3h3M583 272.4h4M616 272.6h3M696 272.3h4M698 272.3h4M770 271.9h4M774 271.8h4M805 271.7h2M805 271.7h5M837 271.5h2M841 271.4h2M849 271.4h4M862 271.3h2M933 270.9h4M938 270.8h5M967 270.7h4" stroke="#303030" stroke-width="3.2" fill="none"/>
<path clip-path="url(#fclip)" d="M220 266.7h6M253 267.7h5M258 267.8h5M274 268.3h5M286 268.7h6M303 269.2h3M309 269.3h3M323 269.8h2M337 270.2h3M351 270.6h4M367 271.1h5M367 271.1h5M381 271.5h4M404 272.2h5M414 272.4h4M482 274.1h2M504 274.2h5M504 274.2h4M529 274.4h6M537 274.4h6M552 274.5h4M601 274.8h2M627 275.0h5M636 275.0h5M646 275.0h4M662 274.9h5M667 274.8h4M678 274.8h4M715 274.5h3M753 274.3h4M767 274.2h3M782 274.1h6M805 274.0h5M813 273.9h3M821 273.9h4M842 273.8h5M843 273.8h5M889 273.5h4M890 273.5h3M890 273.5h3M944 273.1h4M967 273.0h5" stroke="#fff" stroke-width="2.0" fill="none"/>
<path clip-path="url(#fclip)" d="M272 270.6h4M302 271.5h4M339 272.6h4M374 273.7h2M409 274.7h3M453 276.0h2M460 276.2h2M506 276.6h5M539 276.8h3M593 277.1h4M619 277.3h2M630 277.4h3M642 277.4h3M674 277.2h5M675 277.2h3M677 277.2h2M728 276.8h4M807 276.4h3M807 276.4h3M835 276.2h5M958 275.4h3M974 275.3h2" stroke="#303030" stroke-width="3.2" fill="none"/>
<path clip-path="url(#fclip)" d="M217 271.3h3M220 271.4h2M220 271.4h5M223 271.5h6M225 271.5h5M227 271.6h2M252 272.4h3M277 273.1h3M278 273.1h5M302 273.9h5M328 274.6h2M347 275.2h5M359 275.5h6M364 275.7h6M389 276.4h2M389 276.4h5M422 277.4h2M429 277.6h5M433 277.7h5M445 278.1h2M454 278.4h4M465 278.7h5M468 278.7h5M477 278.8h5M496 278.9h4M506 279.0h5M562 279.3h5M578 279.4h3M579 279.4h6M602 279.5h5M610 279.6h4M683 279.4h5M701 279.3h3M712 279.3h6M721 279.2h5M739 279.1h6M771 278.9h3M771 278.9h3M781 278.8h4M814 278.6h6M815 278.6h5M847 278.4h5M863 278.3h3M900 278.1h5M923 278.0h6M931 277.9h2M946 277.8h5M951 277.8h5M1002 277.5h3" stroke="#fff" stroke-width="1.9" fill="none"/>
<path clip-path="url(#fclip)" d="M227 274.0h4M247 274.6h2M256 274.9h4M306 276.3h3M309 276.4h4M356 277.8h2M384 278.7h5M453 280.7h3M474 281.2h4M480 281.2h2M487 281.2h4M501 281.3h3M517 281.4h3M523 281.4h2M709 281.7h3M713 281.6h4M762 281.3h2M791 281.2h3M815 281.0h2M816 281.0h5M880 280.6h3M907 280.5h2M955 280.2h3M1048 279.6h4" stroke="#303030" stroke-width="3.2" fill="none"/>
<path clip-path="url(#fclip)" d="M227 276.3h6M232 276.5h2M236 276.6h3M237 276.6h2M252 277.1h5M262 277.4h6M304 278.6h2M320 279.1h4M322 279.2h6M328 279.3h4M345 279.8h6M365 280.4h4M375 280.7h3M434 282.5h6M438 282.6h2M444 282.7h3M484 283.5h6M516 283.7h2M543 283.9h5M561 284.0h6M562 284.0h3M586 284.1h6M606 284.3h3M622 284.3h5M624 284.4h3M629 284.4h2M640 284.4h3M645 284.4h3M665 284.3h2M687 284.1h3M688 284.1h6M692 284.1h6M727 283.9h6M730 283.9h4M731 283.9h6M764 283.7h5M774 283.6h3M804 283.4h4M822 283.3h3M826 283.3h2M848 283.1h4M851 283.1h5M856 283.1h4M859 283.1h3M891 282.9h3M894 282.9h4M901 282.8h6M903 282.8h6M904 282.8h6M923 282.7h3M934 282.6h3M940 282.6h3M948 282.5h6M1057 281.9h6" stroke="#fff" stroke-width="1.8" fill="none"/>
<path clip-path="url(#fclip)" d="M200 277.9h3M274 280.1h2M317 281.4h3M442 285.1h2M496 286.0h3M501 286.0h2M559 286.4h3M566 286.4h3M646 286.8h2M673 286.6h2M680 286.6h4M720 286.3h2M723 286.3h2M754 286.1h3M764 286.0h2M795 285.8h4M850 285.5h4M857 285.5h2M900 285.2h3M942 284.9h2M996 284.6h3" stroke="#303030" stroke-width="1.5" fill="none"/>
<path clip-path="url(#fclip)" d="M226 281.0h5M236 281.3h2M274 282.4h4M306 283.4h3M309 283.5h5M316 283.7h3M324 283.9h4M324 283.9h4M333 284.2h4M335 284.2h5M361 285.0h5M367 285.2h5M375 285.4h5M376 285.4h5M424 286.9h4M435 287.2h4M447 287.5h2M500 288.3h3M503 288.3h2M508 288.4h5M508 288.4h2M527 288.5h3M527 288.5h4M541 288.6h4M560 288.7h2M591 288.9h5M592 288.9h2M603 288.9h4M608 289.0h2M616 289.0h3M630 289.1h5M632 289.1h4M654 289.0h3M681 288.9h6M689 288.8h4M717 288.6h4M725 288.6h6M749 288.4h3M753 288.4h3M762 288.4h6M787 288.2h6M814 288.0h5M814 288.0h4M864 287.7h6M868 287.7h4M884 287.6h3M896 287.5h2M904 287.5h4M905 287.5h3M959 287.2h5" stroke="#fff" stroke-width="1.7" fill="none"/>
<path clip-path="url(#fclip)" d="M289 285.2h4M345 286.9h5M417 289.0h2M451 290.0h2M489 290.6h2M515 290.8h5M548 291.0h2M573 291.1h3M673 291.3h3M685 291.2h4M690 291.2h4M794 290.5h3M805 290.5h3M830 290.3h2M835 290.3h2M846 290.2h3M858 290.2h2M861 290.1h3M922 289.8h4M950 289.6h4M958 289.5h4M978 289.4h3" stroke="#303030" stroke-width="1.5" fill="none"/>
<path clip-path="url(#fclip)" d="M210 285.2h4M215 285.4h3M219 285.5h4M226 285.7h4M226 285.7h3M253 286.5h3M265 286.8h4M269 287.0h6M274 287.1h5M277 287.2h2M305 288.0h4M306 288.1h4M314 288.3h5M316 288.3h3M360 289.7h5M363 289.7h3M369 289.9h5M382 290.3h5M406 291.0h4M425 291.6h5M444 292.2h4M466 292.8h5M500 293.0h3M529 293.2h2M549 293.3h4M558 293.4h6M570 293.4h4M591 293.6h5M604 293.6h4M613 293.7h4M631 293.8h3M638 293.8h4M644 293.8h3M666 293.6h5M675 293.6h4M678 293.6h3M680 293.6h4M693 293.5h2M728 293.3h3M754 293.1h5M798 292.8h3M806 292.8h6M806 292.8h2M817 292.7h4M853 292.5h5M863 292.4h6M874 292.4h4M890 292.3h4M896 292.2h4M902 292.2h6M918 292.1h4M919 292.1h3M926 292.0h4M938 292.0h6M984 291.7h4" stroke="#fff" stroke-width="1.6" fill="none"/>
<path clip-path="url(#fclip)" d="M217 287.8h4M407 293.4h3M433 294.2h4M439 294.4h3M570 295.8h4M595 296.0h2M672 296.0h4M731 295.6h5M806 295.2h3M811 295.1h3M836 295.0h3M843 294.9h2M877 294.7h4M892 294.6h5M927 294.4h2M945 294.3h4M957 294.2h4M958 294.2h3M1021 293.8h4" stroke="#303030" stroke-width="1.5" fill="none"/>
<path clip-path="url(#fclip)" d="M212 289.9h3M221 290.2h4M225 290.3h5M235 290.6h6M247 291.0h4M248 291.0h3M267 291.6h2M269 291.6h3M279 291.9h5M291 292.3h5M292 292.3h2M312 292.9h3M328 293.4h3M331 293.5h3M332 293.5h6M344 293.9h3M352 294.1h4M353 294.1h6M364 294.5h6M372 294.7h4M376 294.8h2M412 295.9h5M417 296.0h6M439 296.7h3M451 297.1h6M461 297.3h6M464 297.4h4M481 297.6h3M486 297.6h6M495 297.7h5M499 297.7h3M505 297.7h3M552 298.0h3M563 298.1h2M573 298.1h4M580 298.2h2M582 298.2h5M588 298.2h3M590 298.2h3M594 298.3h2M609 298.3h3M611 298.4h5M612 298.4h3M636 298.5h3M644 298.5h5M666 298.3h3M672 298.3h5M678 298.3h6M681 298.2h6M690 298.2h3M698 298.1h3M715 298.0h3M745 297.8h4M752 297.8h3M764 297.7h3M792 297.6h2M801 297.5h4M805 297.5h5M812 297.4h5M823 297.4h3M830 297.3h2M832 297.3h5M837 297.3h5M839 297.3h4M845 297.2h4M850 297.2h2M855 297.2h3M856 297.2h5M861 297.1h4M893 296.9h5M921 296.8h5M923 296.8h3M924 296.7h5M938 296.7h3M945 296.6h5M961 296.5h3" stroke="#fff" stroke-width="1.4" fill="none"/>
<path clip-path="url(#fclip)" d="M263 293.8h3M297 294.9h2M302 295.0h5M348 296.4h4M349 296.4h2M356 296.6h2M368 297.0h3M370 297.0h3M405 298.1h2M469 299.9h3M513 300.2h2M533 300.3h4M548 300.4h2M611 300.7h4M623 300.8h2M690 300.6h4M692 300.5h2M696 300.5h4M704 300.5h5M753 300.2h2M794 299.9h3M843 299.6h4M854 299.5h2M956 298.9h3M1050 298.3h4" stroke="#303030" stroke-width="1.5" fill="none"/>
<path clip-path="url(#fclip)" d="M214 294.7h5M227 295.1h4M227 295.1h5M235 295.3h4M268 296.3h3M286 296.8h2M302 297.3h5M306 297.4h4M350 298.7h5M360 299.0h3M361 299.1h3M368 299.3h3M373 299.4h3M388 299.9h5M392 300.0h3M401 300.2h4M436 301.3h3M441 301.4h6M443 301.5h4M448 301.6h5M458 301.9h5M460 302.0h5M472 302.2h4M490 302.3h5M492 302.3h3M498 302.4h3M498 302.4h3M501 302.4h5M509 302.4h2M514 302.5h4M520 302.5h3M521 302.5h2M582 302.9h5M583 302.9h5M634 303.2h4M635 303.2h4M642 303.2h3M652 303.1h2M684 302.9h5M697 302.8h6M711 302.7h3M714 302.7h3M714 302.7h5M738 302.6h3M740 302.6h5M764 302.4h6M767 302.4h5M789 302.3h5M794 302.2h3M817 302.1h3M822 302.1h4M828 302.0h5M832 302.0h2M842 301.9h5M864 301.8h5M894 301.6h6M903 301.6h4M905 301.5h3M916 301.5h2M931 301.4h3M939 301.3h6M940 301.3h2M947 301.3h3M964 301.2h2" stroke="#fff" stroke-width="1.3" fill="none"/>
<path clip-path="url(#fclip)" d="M263 298.5h4M318 300.1h3M330 300.5h4M356 301.3h3M371 301.7h3M410 302.9h4M494 304.7h2M506 304.8h3M536 305.0h3M544 305.0h2M557 305.1h3M684 305.3h5M756 304.8h5M873 304.1h4M933 303.7h2M973 303.5h4" stroke="#303030" stroke-width="1.5" fill="none"/>
<path clip-path="url(#fclip)" d="M201 299.0h4M238 300.1h4M251 300.5h3M256 300.6h6M257 300.6h3M270 301.0h4M272 301.1h5M277 301.2h4M284 301.4h4M294 301.7h4M295 301.8h3M322 302.6h4M324 302.6h5M327 302.7h2M337 303.0h3M345 303.2h4M348 303.3h4M349 303.4h4M360 303.7h2M366 303.9h2M374 304.1h5M383 304.4h5M401 304.9h2M457 306.6h5M459 306.6h5M465 306.8h3M504 307.1h4M522 307.2h3M540 307.3h2M544 307.3h3M544 307.3h4M547 307.3h3M562 307.4h4M589 307.6h4M614 307.7h4M644 307.8h5M646 307.8h5M651 307.8h5M665 307.7h5M667 307.7h3M683 307.6h6M699 307.5h2M710 307.4h2M720 307.4h5M721 307.3h6M735 307.3h3M737 307.2h4M760 307.1h4M761 307.1h2M762 307.1h5M765 307.1h4M769 307.1h5M775 307.0h3M800 306.9h4M815 306.8h5M851 306.5h2M856 306.5h3M864 306.5h5M884 306.3h2M886 306.3h5M900 306.2h4M908 306.2h3M931 306.1h4M956 305.9h4M957 305.9h3M960 305.9h6" stroke="#fff" stroke-width="1.2" fill="none"/>
<path clip-path="url(#fclip)" d="M229 302.2h2M236 302.4h3M259 303.1h4M277 303.6h3M277 303.6h4M292 304.1h2M315 304.7h5M316 304.8h2M357 306.0h2M369 306.3h3M380 306.6h3M407 307.5h5M584 309.9h2M615 310.1h4M690 309.9h4M726 309.7h4M743 309.6h2M801 309.2h5M903 308.6h4M916 308.5h4M965 308.2h3" stroke="#303030" stroke-width="1.5" fill="none"/>
<path clip-path="url(#fclip)" d="M209 303.9h3M218 304.2h4M219 304.2h3M223 304.3h6M231 304.5h3M234 304.6h3M239 304.8h3M239 304.8h5M246 305.0h4M256 305.3h3M258 305.3h2M262 305.5h3M277 305.9h4M309 306.9h3M339 307.7h4M340 307.8h3M350 308.1h6M355 308.2h5M362 308.4h5M362 308.4h4M389 309.2h3M392 309.3h2M395 309.4h3M409 309.8h3M415 310.0h3M425 310.3h5M437 310.7h3M453 311.1h6M464 311.4h2M483 311.6h6M488 311.7h3M490 311.7h4M514 311.8h5M544 312.0h3M548 312.0h5M561 312.1h4M574 312.2h3M575 312.2h4M575 312.2h5M580 312.2h4M590 312.3h3M598 312.3h2M628 312.5h4M679 312.3h2M690 312.2h5M694 312.2h2M696 312.2h3M713 312.1h2M733 311.9h4M742 311.9h4M751 311.8h5M762 311.8h3M777 311.7h3M792 311.6h5M809 311.5h3M826 311.4h6M833 311.3h3M842 311.3h6M844 311.3h2M851 311.2h5M868 311.1h3M921 310.8h3M938 310.7h2M938 310.7h3M939 310.7h4M948 310.6h3M981 310.4h3" stroke="#fff" stroke-width="1.1" fill="none"/>
<path clip-path="url(#fclip)" d="M811 244.5l5 0M795 246.5l3 1M909 247.5l5 1M579 248.5l1 0M406 249.5l5 1M594 250.5l2 -1M906 251.5l3 0M414 251.5l1 0M533 252.5l2 0M580 252.5l3 0M955 253.5l2 -1M841 253.5l3 0M932 253.5l2 0M583 254.5l3 0M488 254.5l4 -1M732 254.5l3 0M892 255.5l2 0M423 255.5l5 1M499 255.5l5 0M564 256.5l1 0M482 256.5l1 0M908 256.5l2 -1M452 257.5l2 1M780 257.5l1 1M587 257.5l4 1M947 258.5l1 -1M529 258.5l5 0M418 258.5l3 -1M639 259.5l1 0M424 259.5l2 0M890 259.5l1 1M941 259.5l3 1M523 260.5l3 0M752 260.5l3 -1M954 260.5l3 0M868 260.5l1 0M876 261.5l2 0M550 261.5l2 0M545 261.5l1 0M507 261.5l1 1M931 262.5l2 0M580 262.5l1 1M702 262.5l3 0M784 262.5l5 0M576 263.5l3 1M943 263.5l3 1M892 263.5l5 0M901 263.5l4 0M531 263.5l3 0M807 264.5l2 0M769 264.5l1 -1M837 264.5l4 0M625 264.5l3 0M781 264.5l3 -1M653 265.5l3 0M663 265.5l4 1M683 265.5l3 -1M955 265.5l2 1M596 265.5l1 1M546 266.5l4 0M437 266.5l5 -1M770 266.5l3 0M544 266.5l5 1M878 266.5l2 -1M717 267.5l2 0M917 267.5l3 0M691 267.5l3 0M853 267.5l2 0M483 267.5l4 1M497 267.5l5 0M600 268.5l5 1M466 268.5l2 0M607 268.5l2 0M769 268.5l3 -1M567 268.5l4 0M551 268.5l2 1M649 269.5l3 0M823 269.5l2 0M779 269.5l2 1M689 269.5l2 -1M605 269.5l2 1M539 269.5l3 0M543 270.5l3 0M569 270.5l3 0M911 270.5l2 0M546 270.5l3 0M692 270.5l3 0M510 270.5l3 0M744 270.5l2 0M608 271.5l1 0M941 271.5l3 -1M852 271.5l2 0M613 271.5l3 0M916 271.5l2 -1M606 271.5l4 0M437 272.5l5 1M610 272.5l3 1M676 272.5l4 0M457 272.5l3 1M922 272.5l4 1M630 272.5l3 0M896 272.5l3 1M684 273.5l5 0M773 273.5l4 0M622 273.5l1 0M708 273.5l5 1M829 273.5l1 0M521 273.5l1 -1M856 273.5l1 1M820 274.5l3 1M428 274.5l4 0M796 274.5l3 0M706 274.5l4 1M870 274.5l2 1M855 274.5l5 0M577 274.5l2 -1M948 274.5l2 -1M544 275.5l2 1M540 275.5l5 0M709 275.5l3 1M779 275.5l2 0M536 275.5l3 1M878 275.5l2 0M510 275.5l1 0M698 275.5l2 1M795 276.5l2 0M919 276.5l2 0M653 276.5l4 -1M769 276.5l4 0M402 276.5l1 1M931 276.5l5 0M417 276.5l2 1M561 276.5l4 0M729 277.5l3 1M921 277.5l3 0M890 277.5l1 0M640 277.5l4 0M424 277.5l5 0M854 277.5l3 0M405 277.5l4 -1M811 277.5l2 1M801 278.5l4 0M847 278.5l3 0M479 278.5l4 0M687 278.5l3 0M510 278.5l1 0M630 278.5l4 0M793 278.5l3 1M484 278.5l1 0M420 278.5l5 1M528 279.5l3 0M794 279.5l4 0M571 279.5l2 0M705 279.5l2 0M927 279.5l4 0M617 279.5l1 0M610 279.5l4 0M522 279.5l3 0M508 279.5l2 0M778 280.5l1 0M862 280.5l1 0M956 280.5l3 -1M438 280.5l3 0M407 280.5l5 1M896 280.5l1 0M669 280.5l5 0M732 280.5l3 0M510 280.5l3 0M826 281.5l2 -1M916 281.5l1 -1M733 281.5l1 0M506 281.5l2 0M425 281.5l2 0M649 281.5l2 0M813 281.5l2 0M839 281.5l2 0M803 281.5l3 0M460 282.5l2 -1M618 282.5l1 0M419 282.5l3 0M629 282.5l4 0M630 282.5l5 0M440 282.5l4 0M599 282.5l4 0M583 282.5l5 1M567 282.5l2 0M531 283.5l2 1M549 283.5l3 0M579 283.5l2 0M716 283.5l1 -1M541 283.5l2 0M623 283.5l2 0M907 283.5l4 -1M679 283.5l1 0M456 283.5l1 1M841 283.5l4 -1M814 284.5l1 0M483 284.5l2 0M635 284.5l3 -1M458 284.5l3 0M444 284.5l3 0M528 284.5l3 -1M796 284.5l1 0M438 284.5l2 0M420 284.5l3 0M854 284.5l2 0M852 284.5l3 -1M403 285.5l3 1M415 285.5l5 0M480 285.5l3 0M482 285.5l2 0M511 285.5l2 0M795 285.5l1 0M841 285.5l3 0M676 285.5l5 0M906 285.5l5 -1M754 285.5l2 0M838 286.5l1 0M724 286.5l5 1M774 286.5l4 1M473 286.5l5 0M905 286.5l4 1M864 286.5l5 -1M489 286.5l3 -1M565 286.5l3 -1M765 286.5l4 0M435 286.5l5 0M872 287.5l2 0M727 287.5l3 0M889 287.5l3 0M617 287.5l5 1M842 287.5l4 0M860 287.5l3 0M525 287.5l4 0M769 287.5l5 1M842 287.5l1 0M671 287.5l1 0M890 287.5l3 1M565 288.5l2 0M703 288.5l1 0M618 288.5l3 -1M415 288.5l2 0M954 288.5l2 1M626 288.5l3 0M465 288.5l4 0M608 288.5l2 1M549 288.5l2 0M491 288.5l2 -1M892 288.5l3 0M933 289.5l3 -1M503 289.5l5 0M616 289.5l1 0M876 289.5l1 0M652 289.5l5 0M810 289.5l4 0M949 289.5l4 -1M771 289.5l2 0M771 289.5l1 -1M747 289.5l3 0M934 289.5l2 0M768 289.5l4 1M851 290.5l1 1M674 290.5l4 0M429 290.5l5 0M710 290.5l3 0M818 290.5l2 -1M818 290.5l1 0M668 290.5l1 0M478 290.5l3 -1M682 290.5l3 0M816 290.5l4 0M749 290.5l2 0M831 290.5l1 1M626 291.5l1 1M674 291.5l4 0M785 291.5l2 0M488 291.5l3 1M860 291.5l5 -1M592 291.5l2 0M686 291.5l1 0M570 291.5l3 0M779 291.5l1 -1M564 291.5l3 0M937 291.5l2 0M571 291.5l3 0M918 292.5l3 0M779 292.5l2 1M576 292.5l5 1M547 292.5l2 -1M650 292.5l5 1M754 292.5l5 0M422 292.5l2 -1M661 292.5l3 1M819 292.5l2 1M600 292.5l3 -1M852 292.5l5 0M543 292.5l5 0M861 293.5l3 0M595 293.5l2 0M947 293.5l1 -1M451 293.5l3 1M865 293.5l4 0M919 293.5l2 0M940 293.5l4 0M832 293.5l3 0M621 293.5l3 0M593 293.5l2 0M695 293.5l3 1M773 293.5l2 0M517 293.5l4 0M434 294.5l1 -1M772 294.5l3 1M623 294.5l3 0M838 294.5l4 0M482 294.5l4 0M678 294.5l2 0M814 294.5l5 1M890 294.5l2 1M741 294.5l2 0M830 294.5l3 -1M550 294.5l2 0M570 294.5l2 -1M944 294.5l5 0M789 295.5l1 0M867 295.5l2 0M399 295.5l4 0M648 295.5l3 0M945 295.5l3 -1M731 295.5l1 0M699 295.5l3 0M668 295.5l2 0M938 295.5l3 -1M526 295.5l3 0M555 295.5l5 -1M698 295.5l1 0M834 295.5l1 -1M547 295.5l2 0M551 296.5l1 -1M460 296.5l3 -1M932 296.5l3 0M771 296.5l1 0M936 296.5l2 0M437 296.5l3 -1M472 296.5l3 -1M652 296.5l2 -1M504 296.5l3 0M556 296.5l2 0M810 296.5l3 0M643 296.5l2 0M831 296.5l2 -1M867 297.5l2 0M913 297.5l4 -1M801 297.5l1 0M512 297.5l1 -1M545 297.5l2 0M714 297.5l2 0M569 297.5l1 0M785 297.5l3 0M848 297.5l3 0M589 297.5l5 0M601 297.5l3 1M953 297.5l2 0M664 297.5l5 0M874 297.5l3 -1M615 298.5l2 0M765 298.5l2 0M927 298.5l3 1M831 298.5l4 1M487 298.5l5 1M472 298.5l1 0M517 298.5l3 -1M610 298.5l1 0M657 298.5l1 0M896 298.5l3 0M879 298.5l2 -1M711 298.5l3 1M828 298.5l2 0M534 298.5l2 1M891 298.5l1 -1M927 299.5l3 1M718 299.5l4 1M824 299.5l3 0M880 299.5l2 1M763 299.5l5 0M799 299.5l3 1M737 299.5l1 1M733 299.5l1 0M846 299.5l2 0M617 299.5l5 0M753 299.5l4 0M533 299.5l2 0M418 299.5l1 1M532 299.5l2 0M755 300.5l3 0M420 300.5l3 0M666 300.5l1 0M502 300.5l5 -1M488 300.5l3 0M456 300.5l5 1M911 300.5l1 0M875 300.5l3 0M679 300.5l3 -1M731 300.5l5 -1M441 300.5l1 -1M742 300.5l3 1M773 300.5l3 0M411 300.5l5 -1M654 301.5l1 0M774 301.5l1 -1M945 301.5l3 -1M595 301.5l1 0M807 301.5l5 0M447 301.5l2 0M570 301.5l2 0M674 301.5l3 0M828 301.5l1 0M439 301.5l1 -1M517 301.5l3 1M949 301.5l3 -1M761 301.5l5 0M909 301.5l5 0M799 301.5l1 0M639 302.5l1 0M744 302.5l2 1M540 302.5l2 0M839 302.5l5 0M413 302.5l3 0M488 302.5l2 1M825 302.5l5 0M551 302.5l2 0M628 302.5l1 0M526 302.5l2 0M398 302.5l5 0M896 302.5l5 0M695 302.5l1 0M860 302.5l2 1M749 302.5l2 0M939 303.5l2 0M695 303.5l4 -1M534 303.5l3 -1M784 303.5l4 0M760 303.5l2 0M821 303.5l1 0M639 303.5l1 0M740 303.5l3 0M784 303.5l4 0M820 303.5l2 0M541 303.5l1 0M785 303.5l2 0M744 303.5l4 -1M477 303.5l1 -1M435 303.5l3 0M441 303.5l4 0M438 304.5l1 0M710 304.5l4 1M761 304.5l3 0M914 304.5l3 0M902 304.5l2 0M618 304.5l4 0M647 304.5l4 0M880 304.5l3 0M578 304.5l2 0M615 304.5l5 0M457 304.5l2 0M773 304.5l2 -1M403 304.5l2 0M905 304.5l2 -1M572 304.5l2 0M423 304.5l3 0M429 305.5l2 0M717 305.5l2 0M433 305.5l1 0M875 305.5l2 0M601 305.5l4 0M475 305.5l5 0M605 305.5l2 -1M769 305.5l5 0M907 305.5l2 0M824 305.5l5 0M523 305.5l2 0M825 305.5l5 0M532 305.5l3 0M885 305.5l1 0M769 305.5l5 0M529 305.5l1 1M462 306.5l3 -1M796 306.5l1 1M463 306.5l3 0M907 306.5l3 1M431 306.5l2 0M546 306.5l3 1M531 306.5l2 -1M429 306.5l3 0M669 306.5l2 -1M740 306.5l5 1M459 306.5l3 -1M428 306.5l3 0M683 306.5l2 0M454 306.5l3 0M660 306.5l3 0M439 306.5l3 0M554 307.5l5 0M435 307.5l4 1M667 307.5l2 -1M403 307.5l4 -1M903 307.5l4 1M782 307.5l1 -1M761 307.5l5 1M770 307.5l2 0M478 307.5l5 0M812 307.5l5 0M765 307.5l4 0M790 307.5l1 -1M654 307.5l4 0M649 307.5l5 0M557 307.5l2 0M568 307.5l2 -1M434 308.5l1 0M404 308.5l3 0M434 308.5l2 -1M876 308.5l4 1M774 308.5l2 -1M905 308.5l2 1M510 308.5l5 1M549 308.5l5 0M415 308.5l2 0M629 308.5l4 0M716 308.5l5 0M531 308.5l5 0M484 308.5l5 0M737 308.5l3 -1M704 308.5l3 0M543 308.5l3 0M630 309.5l2 -1M473 309.5l2 0M491 309.5l3 0M442 309.5l5 1M840 309.5l2 -1M768 309.5l5 0M934 309.5l2 1M450 309.5l3 0M940 309.5l2 0M559 309.5l2 0M633 309.5l3 1M873 309.5l5 -1M724 309.5l3 0M677 309.5l3 -1M778 309.5l2 -1M937 309.5l2 1M901 310.5l3 1M499 310.5l4 0M758 310.5l3 0M933 310.5l2 0M790 310.5l1 -1M780 310.5l2 0M846 310.5l1 1M664 310.5l4 0M658 310.5l2 0M946 310.5l1 0M701 310.5l3 0M902 310.5l2 0M809 310.5l2 1M769 310.5l5 0M469 310.5l2 0M890 310.5l1 0M893 311.5l3 1M760 311.5l3 -1M652 311.5l2 -1M702 311.5l2 1M573 311.5l5 1M786 311.5l4 0M618 311.5l1 0M866 311.5l4 0M753 311.5l4 -1M939 311.5l2 0M827 311.5l2 0M489 311.5l1 -1M652 311.5l4 -1M423 311.5l1 -1M697 311.5l4 -1M550 311.5l1 0M445 312.5l2 0M494 312.5l2 0M902 312.5l5 0M408 312.5l1 0M921 312.5l2 0M661 312.5l1 -1M593 312.5l2 1M816 312.5l5 0M584 312.5l1 0M488 312.5l1 0M747 312.5l4 0M471 312.5l5 0M589 312.5l3 0M503 312.5l3 0M818 312.5l5 1M613 312.5l4 0M844 313.5l5 1M450 313.5l3 0M504 313.5l4 1M848 313.5l5 0M746 313.5l5 1M714 313.5l2 0M505 313.5l3 0M458 313.5l4 1M532 313.5l2 -1M635 313.5l3 0M803 313.5l1 0M803 313.5l2 -1M560 313.5l4 1M742 313.5l2 0M950 313.5l4 0M471 313.5l1 0M587 314.5l4 0M619 314.5l3 0M428 314.5l3 0M447 314.5l1 0M685 314.5l2 0M920 314.5l2 1M414 314.5l2 0M837 314.5l4 -1M885 314.5l4 1M694 314.5l5 0M457 314.5l1 -1M614 314.5l3 0M539 314.5l4 -1M521 314.5l2 1M923 314.5l3 0M697 314.5l5 0M456 315.5l3 0M754 315.5l2 0M418 315.5l3 0M432 315.5l4 -1M417 315.5l4 0M875 315.5l4 0M642 315.5l1 0M618 315.5l1 0M415 315.5l5 0M694 315.5l4 0M574 315.5l5 -1M736 315.5l3 0M531 315.5l3 1M794 315.5l2 0M897 315.5l3 -1M463 315.5l2 1M934 316.5l3 0M823 316.5l3 0M809 316.5l2 0M911 316.5l3 0M884 316.5l3 0M847 316.5l1 0M685 316.5l5 0M945 316.5l3 0M573 316.5l4 0M780 316.5l4 1M429 316.5l1 0M720 316.5l1 0M737 316.5l1 0M525 316.5l2 0M930 316.5l2 0M744 316.5l3 1M926 317.5l1 1M821 317.5l5 -1M821 317.5l2 0M953 317.5l4 0M820 317.5l5 0M539 317.5l4 0M611 317.5l5 0M472 317.5l3 0M773 317.5l1 0M900 317.5l2 0M890 317.5l2 -1M763 317.5l1 -1M946 317.5l2 1M836 317.5l5 0M806 317.5l2 0M433 317.5l1 0M894 317.5l5 0M437 318.5l1 1M813 318.5l2 1M756 318.5l2 1M932 318.5l2 -1M661 318.5l2 0M812 318.5l2 -1M910 318.5l3 -1M957 318.5l3 0M669 318.5l3 0M891 318.5l4 0M514 318.5l2 -1M601 318.5l4 0M764 318.5l3 0M656 318.5l3 1M410 318.5l2 1M957 318.5l2 -1M560 318.5l3 0M842 319.5l3 0M520 319.5l4 1M485 319.5l4 0M919 319.5l2 0M566 319.5l2 -1M808 319.5l2 1M704 319.5l3 0M772 319.5l2 -1M934 319.5l5 -1M902 319.5l2 0M407 319.5l4 -1M890 319.5l1 -1M600 319.5l1 0M680 319.5l3 0M684 319.5l2 -1M517 319.5l2 1M848 319.5l3 0M542 320.5l2 0M633 320.5l3 1M427 320.5l5 0M847 320.5l4 0M817 320.5l2 -1M540 320.5l3 0M527 320.5l2 0M945 320.5l4 0M817 320.5l4 -1M796 320.5l2 1M916 320.5l1 1M927 320.5l3 0M884 320.5l5 -1M777 320.5l2 0M655 320.5l4 0M957 320.5l2 1M535 321.5l2 0M487 321.5l3 0M744 321.5l2 0M488 321.5l2 1M445 321.5l2 -1M574 321.5l3 0M500 321.5l3 1M828 321.5l3 1M662 321.5l2 1M688 321.5l3 -1M683 321.5l3 0M528 321.5l2 1M939 321.5l3 0M596 321.5l3 0M594 321.5l4 1M759 321.5l3 -1M596 322.5l5 1M714 322.5l4 1M940 322.5l3 0M639 322.5l4 0M939 322.5l2 0M836 322.5l3 0M803 322.5l4 0M709 322.5l2 -1M789 322.5l4 0M688 322.5l2 0M813 322.5l5 1M684 323.5l3 0M712 323.5l3 0M822 323.5l3 0M706 323.5l3 -1M810 323.5l5 0M586 323.5l5 1M605 323.5l5 -1M585 323.5l2 0M891 323.5l2 1M588 323.5l2 0M602 323.5l5 0M666 324.5l1 1M680 324.5l4 0M938 324.5l3 -1M928 324.5l1 0M744 324.5l2 0M863 324.5l5 1M740 324.5l4 0M806 324.5l2 0M612 324.5l2 0M595 324.5l2 0M622 324.5l2 0M648 324.5l3 0M946 325.5l2 0M950 325.5l3 0M728 325.5l2 1M668 325.5l1 0M643 325.5l2 0M817 325.5l4 0M748 325.5l3 0M876 325.5l3 -1M585 325.5l3 0M807 325.5l2 1M773 325.5l2 0M792 326.5l2 1M646 326.5l3 0M841 326.5l1 -1M883 326.5l5 -1M935 326.5l5 0M737 326.5l4 0M795 326.5l4 1M706 326.5l3 -1M931 326.5l3 0M700 326.5l3 0M682 326.5l2 -1M955 327.5l4 0M700 327.5l5 -1M679 327.5l3 0M640 327.5l5 -1M765 327.5l2 0M766 327.5l5 0M636 327.5l5 0M797 327.5l2 -1M772 327.5l4 0M613 327.5l5 0M685 328.5l1 -1M909 328.5l3 0M611 328.5l3 0M617 328.5l3 0M661 328.5l4 0M685 328.5l2 0M928 328.5l3 -1M741 328.5l3 0M752 328.5l5 0M732 328.5l4 1M942 328.5l1 0M692 329.5l3 -1M859 329.5l2 0M821 329.5l3 0M678 329.5l3 0M748 329.5l1 0M611 329.5l5 0M661 329.5l3 1M911 329.5l1 0M710 329.5l3 0M942 329.5l4 0M897 330.5l2 0M642 330.5l2 1M904 330.5l2 0M678 330.5l1 0M641 330.5l3 0M947 330.5l5 0M818 330.5l3 -1M903 330.5l3 0M617 330.5l3 0M838 330.5l4 1M755 331.5l5 -1M944 331.5l2 0M777 331.5l1 -1M700 331.5l2 0M920 331.5l3 1M933 331.5l3 0M617 331.5l3 -1M704 331.5l2 0M719 331.5l1 0M768 331.5l2 0M787 332.5l2 0M700 332.5l3 0M942 332.5l3 0M793 332.5l4 0M762 332.5l4 0M785 332.5l5 0M716 332.5l3 0M694 332.5l4 0M848 332.5l3 0M739 332.5l2 -1M775 333.5l1 0M833 333.5l2 0M955 333.5l3 0M681 333.5l2 0M946 333.5l2 -1M842 333.5l3 1M712 333.5l3 -1M892 333.5l1 -1M657 333.5l1 0M618 333.5l1 0M801 333.5l3 0M835 333.5l2 1M955 333.5l1 0M806 333.5l2 0M917 334.5l3 0M742 334.5l1 0M956 334.5l2 -1M781 334.5l2 0M721 334.5l2 -1M630 334.5l2 0M785 334.5l1 0M637 334.5l1 -1M881 334.5l1 0M697 334.5l3 -1M616 334.5l2 1M755 334.5l1 0M669 334.5l1 0M582 335.5l2 0M872 335.5l2 -1M726 335.5l2 1M869 335.5l1 0M751 335.5l3 0M929 335.5l3 0M655 335.5l2 0M873 335.5l1 0M825 335.5l2 0M608 335.5l2 0M839 335.5l1 0M743 335.5l1 -1M742 335.5l1 -1M626 336.5l1 0M688 336.5l1 0M598 336.5l3 0M773 336.5l1 0M833 336.5l2 0M830 336.5l1 0M921 336.5l1 0M830 336.5l1 0M734 336.5l3 0M956 336.5l2 0M681 336.5l2 0M594 336.5l2 1M606 336.5l1 0M601 336.5l1 0M618 337.5l3 1M676 337.5l1 1M793 337.5l2 0M604 337.5l3 1M628 337.5l1 1M745 337.5l1 0M799 337.5l1 0M623 337.5l2 0M600 337.5l3 0M712 337.5l2 1M849 337.5l2 0M950 337.5l2 0M615 338.5l2 0M821 338.5l1 0M851 338.5l1 1M615 338.5l1 0M638 338.5l2 0M911 338.5l3 0M900 338.5l3 -1M747 338.5l3 -1M654 338.5l3 0M763 338.5l2 0M721 338.5l3 -1M802 338.5l1 -1M685 338.5l3 0M738 339.5l3 0M596 339.5l2 0M625 339.5l2 0M776 339.5l1 -1M785 339.5l3 0M691 339.5l1 0M762 339.5l1 1M906 339.5l2 1M716 339.5l2 0M892 339.5l2 0M820 339.5l1 0M787 339.5l2 0M745 340.5l3 -1M916 340.5l2 0M709 340.5l2 0M852 340.5l1 1M619 340.5l1 0M919 340.5l1 0M918 340.5l2 1M689 340.5l1 0M638 340.5l1 0M713 340.5l1 0M705 340.5l1 0M741 340.5l1 0M722 341.5l1 0M921 341.5l2 -1M730 341.5l3 0M953 341.5l2 1M650 341.5l1 0M623 341.5l2 0M628 341.5l1 -1M851 341.5l1 0M799 341.5l3 -1M668 341.5l1 0M848 341.5l1 0M872 342.5l2 0M594 342.5l2 -1M824 342.5l3 0M773 342.5l1 0M660 342.5l2 1M926 342.5l1 0M624 342.5l2 0M827 342.5l2 0M706 342.5l1 1M820 342.5l3 -1M886 342.5l2 1M761 343.5l1 0M831 343.5l2 0M806 343.5l1 -1M898 343.5l3 1M640 343.5l1 0M867 343.5l2 0M697 343.5l1 0M606 343.5l1 0M719 343.5l2 1M772 343.5l2 0M775 343.5l1 0M767 344.5l2 0M906 344.5l1 0M912 344.5l2 0M808 344.5l3 -1M684 344.5l1 -1M941 344.5l2 0M718 344.5l3 0M632 344.5l1 0M641 344.5l1 0M664 344.5l1 0M957 344.5l1 -1M733 345.5l1 0M879 345.5l2 0M894 345.5l2 0M591 345.5l1 0M838 345.5l1 1M786 345.5l1 -1M645 345.5l1 0M678 345.5l3 0M845 345.5l1 -1M909 345.5l2 -1M851 346.5l3 0M631 346.5l2 0M837 346.5l3 -1M878 346.5l3 0M834 346.5l2 -1M628 346.5l2 1M750 346.5l1 0M827 346.5l1 0M811 346.5l1 -1M933 346.5l3 0M900 347.5l1 -1M589 347.5l3 0M746 347.5l2 -1M670 347.5l1 0M699 347.5l2 -1M590 347.5l2 0M605 347.5l1 0M816 347.5l1 0M640 347.5l2 0M694 347.5l1 0M746 348.5l2 -1M930 348.5l1 0M666 348.5l1 -1M763 348.5l3 0M724 348.5l3 1M722 348.5l2 0M935 348.5l1 0M682 348.5l3 0M630 348.5l2 1M616 349.5l2 0M754 349.5l2 -1M763 349.5l3 0M732 349.5l1 0M768 349.5l2 0M778 349.5l1 1M927 349.5l2 -1M659 349.5l1 0M714 349.5l1 0M684 349.5l1 1M804 350.5l1 0M745 350.5l1 0M676 350.5l1 -1M789 350.5l3 0M845 350.5l1 0M834 350.5l1 1M888 350.5l2 1M651 350.5l1 0M736 350.5l3 0M824 351.5l2 1M685 351.5l1 0M853 351.5l1 0M760 351.5l3 0M746 351.5l3 1M896 351.5l1 0M748 351.5l3 0M783 351.5l1 0M818 351.5l3 0M645 352.5l2 0M619 352.5l1 0M841 352.5l1 0M788 352.5l1 0M897 352.5l1 0M674 352.5l1 0M676 352.5l1 0M765 352.5l2 0M754 353.5l2 0M878 353.5l2 0M865 353.5l1 0M704 353.5l1 1M844 353.5l1 0M659 353.5l1 0M866 353.5l2 -1M728 353.5l2 1M938 354.5l3 1M836 354.5l3 -1M894 354.5l2 0M647 354.5l2 1M660 354.5l1 -1M662 354.5l3 0M956 354.5l3 0M610 354.5l2 1M585 355.5l2 0M899 355.5l2 0M911 355.5l2 0M634 355.5l2 0M829 355.5l1 1M747 355.5l2 -1M806 355.5l2 0M833 356.5l2 0M879 356.5l2 -1M840 356.5l1 0M615 356.5l1 0M590 356.5l2 0M813 356.5l3 1M918 356.5l1 -1M755 356.5l2 1M745 357.5l1 1M946 357.5l2 1M824 357.5l2 1M776 357.5l3 0M895 357.5l3 0M826 357.5l2 0M638 357.5l2 -1M638 358.5l3 0M741 358.5l2 0M626 358.5l1 1M611 358.5l3 1M831 358.5l2 -1M746 358.5l1 0M929 358.5l1 1M851 359.5l1 1M718 359.5l2 0M586 359.5l1 -1M664 359.5l1 0M789 359.5l3 -1M607 359.5l2 1M747 359.5l3 0M945 360.5l3 0M785 360.5l2 0M806 360.5l1 0M742 360.5l3 0M802 360.5l2 1M689 360.5l3 1M588 360.5l2 -1M788 361.5l3 0M616 361.5l3 1M709 361.5l2 0M700 361.5l3 0M852 361.5l2 0M736 361.5l3 0M806 362.5l1 1M937 362.5l2 -1M883 362.5l1 -1M825 362.5l3 0M610 362.5l1 0M678 362.5l3 0M646 363.5l1 0M830 363.5l1 0M760 363.5l3 1M596 363.5l1 1M728 363.5l2 0M722 363.5l3 0M795 364.5l3 1M651 364.5l1 -1M874 364.5l3 1M594 364.5l1 0M838 364.5l1 -1M935 364.5l2 0M754 365.5l2 0M807 365.5l1 -1M833 365.5l1 0M639 365.5l3 -1M660 365.5l2 0M634 366.5l3 0M950 366.5l2 0M694 366.5l2 0M729 366.5l1 1M663 366.5l2 0M819 367.5l1 0M943 367.5l1 1M676 367.5l1 -1M618 367.5l2 -1M832 367.5l1 0M660 368.5l1 0M797 368.5l1 0M869 368.5l3 0M818 368.5l3 1M788 368.5l2 0M755 369.5l2 1M641 369.5l1 -1M877 369.5l2 -1M744 369.5l1 0M794 369.5l2 0M720 370.5l1 0M706 370.5l2 0M934 370.5l3 1M750 370.5l2 -1M622 371.5l3 0M886 371.5l1 0M659 371.5l1 1M832 371.5l1 0M957 371.5l2 1M819 372.5l1 0M646 372.5l1 0M751 372.5l1 1M861 372.5l3 0M901 373.5l1 -1M735 373.5l2 0M818 373.5l2 1M602 373.5l3 0M702 373.5l3 1M707 374.5l1 0M615 374.5l1 1M905 374.5l2 1M945 374.5l1 -1M723 374.5l2 0M817 375.5l2 -1M942 375.5l2 -1M779 375.5l1 1M617 375.5l1 1M883 376.5l3 0M624 376.5l3 1M909 376.5l2 0M809 376.5l2 -1M928 377.5l2 0M713 377.5l2 1M619 377.5l3 -1M600 377.5l2 -1M892 378.5l2 -1M882 378.5l1 1M754 378.5l3 -1M946 378.5l3 1M921 379.5l1 0M938 379.5l1 0M701 379.5l1 0M592 379.5l1 0M724 380.5l1 -1M950 380.5l2 -1M802 380.5l1 0M746 380.5l2 0M749 381.5l3 0M934 381.5l1 -1M682 381.5l2 0M934 381.5l1 0M787 382.5l1 0M705 382.5l1 1M631 382.5l2 -1M799 383.5l1 1M772 383.5l1 1M890 383.5l1 0M638 384.5l2 0M921 384.5l1 0M870 385.5l2 -1M895 385.5l2 0M928 385.5l2 1M901 386.5l3 1M684 386.5l2 -1M631 387.5l2 0M672 387.5l1 0M696 388.5l1 0M702 388.5l2 1M885 388.5l3 0M615 389.5l2 0M641 389.5l1 0M832 390.5l1 0M673 390.5l1 1M624 391.5l2 0M656 391.5l3 1M876 392.5l3 0M844 392.5l1 1M738 393.5l2 0M661 393.5l2 1M907 394.5l2 0M724 394.5l1 0M794 395.5l2 0M767 395.5l2 0M845 396.5l1 -1M743 396.5l1 1M896 397.5l2 1M791 398.5l1 1M696 399.5l3 0M749 400.5l2 0M925 400.5l3 1M815 401.5l1 0M910 402.5l2 0M783 403.5l2 0M911 403.5l1 1M757 404.5l2 0M838 405.5l1 0M955 406.5l2 1M720 407.5l2 1M621 408.5l1 0M800 409.5l2 1M796 410.5l1 0M803 411.5l3 1M726 412.5l2 1M769 413.5l3 0M887 414.5l1 0M610 415.5l1 0M693 416.5l3 1M596 417.5l1 0M927 420.5l2 0M789 421.5l2 0M610 422.5l2 0M855 424.5l2 1M757 426.5l1 1M850 430.5l2 -1M695 431.5l2 0" stroke="#303030" stroke-width="1.3" fill="none"/>
<path d="M374 175 Q374 169 383 169 Q393 169 393 175 L394 307 L377 307 Z" fill="#fff"/>
<rect x="253.5" y="273.0" width="4" height="4" fill="#f4f4f4"/>
<rect x="273.5" y="275.0" width="4" height="4" fill="#f4f4f4"/>
<rect x="290.0" y="276.0" width="4" height="4" fill="#f4f4f4"/>
<rect x="304.5" y="276.0" width="4" height="4" fill="#f4f4f4"/>
<rect x="319.0" y="277.0" width="4" height="4" fill="#f4f4f4"/>
<rect x="335.5" y="278.5" width="4" height="4" fill="#f4f4f4"/>
<rect x="348.0" y="279.0" width="4" height="4" fill="#f4f4f4"/>
<rect x="357.6" y="276.7" width="4" height="4" fill="#f4f4f4"/>
<rect x="361.0" y="267.0" width="4" height="4" fill="#f4f4f4"/>
<g filter="url(#rough)">
<polygon points="497.0,21.7 543.8,15.0 594.6,5.7 690.7,2.2 770.9,3.0 851.0,8.4 957.9,24.4 957.9,48.4 917.8,41.7 851.0,25.7 770.9,17.7 690.7,16.4 594.6,24.4 577.2,28.4 573.2,40.4 497.0,38.5" fill="#fff"/>
<rect x="704.1" y="30.5" width="36.1" height="16.0" fill="#f0f0f0"/>
<polygon points="505.1,137.9 537.1,127.2 565.2,119.2 565.2,105.9 594.6,101.9 597.2,129.9 637.3,132.6 641.3,123.2 646.7,124.6 648.0,143.3 654.7,129.9 669.4,129.4 668.0,111.2 690.7,108.5 690.7,95.2 702.8,95.2 702.8,105.9 710.8,105.9 710.8,93.0 720.1,93.0 720.1,105.9 728.1,105.9 728.1,95.2 738.3,95.2 738.3,109.1 764.2,111.2 761.5,131.2 792.3,132.6 837.7,137.9 840.3,121.9 851.0,108.5 884.4,113.9 884.4,129.9 957.9,154.0 952.6,186.0 939.2,220.7 915.2,218.1 877.7,196.7 824.3,180.7 770.9,170.0 717.4,166.0 664.0,168.7 610.6,175.3 557.1,188.7 530.4,204.7 509.1,207.4" fill="#fff"/>
<rect x="630.6" y="171.3" width="18.7" height="13.4" fill="#fff"/>
<rect x="650.7" y="168.7" width="16.0" height="18.7" fill="#fff"/>
<rect x="754.9" y="172.7" width="18.7" height="13.4" fill="#fff"/>
<rect x="778.9" y="175.3" width="16.0" height="16.0" fill="#fff"/>
<rect x="636.0" y="137.9" width="10.7" height="13.4" fill="#303030" opacity="0.85"/>
<rect x="522.4" y="148.6" width="8.0" height="8.0" fill="#303030" opacity="0.85"/>
<rect x="672.0" y="116.6" width="6.7" height="10.7" fill="#303030" opacity="0.85"/>
<rect x="688.1" y="125.9" width="53.4" height="2.7" fill="#303030" opacity="0.85"/>
<path d="M841.7 137.9L901.8 152.6" stroke="#303030" stroke-width="2.2" opacity="0.9"/>
<path d="M905.8 155.3L936.5 169.5" stroke="#303030" stroke-width="3.6" opacity="0.9"/>
<path d="M537.1 133.1L565.2 125.1" stroke="#303030" stroke-width="2.0" opacity="0.9"/>
<path d="M575.9 132.6L594.6 130.4" stroke="#303030" stroke-width="3.0" opacity="0.9"/>
<path d="M792.3 132.6L793.6 156.6" stroke="#303030" stroke-width="1.5" opacity="0.9"/>
<path d="M761.5 132.6L760.2 156.6" stroke="#303030" stroke-width="1.5" opacity="0.9"/>
</g>
<polygon points="742.1,606.5 770.2,592.1 855.6,599.3 893.6,619.4 915.7,694.7 752.6,681.5" fill="none" stroke="#dcdcdc" stroke-width="7" stroke-linejoin="miter"/>
<rect x="739.5" y="625.4" width="10" height="4" fill="#555" opacity="0.8"/>
<rect x="744.3" y="657.4" width="10" height="4" fill="#555" opacity="0.8"/>
<rect x="892.6" y="634.6" width="10" height="4" fill="#555" opacity="0.8"/>
<rect x="903.9" y="671.5" width="10" height="4" fill="#555" opacity="0.8"/>
<path d="M826 520L825.2 633M828.5999999999999 520L826.5999999999999 633" stroke="#c9c24f" stroke-width="1.5" fill="none"/>
<path d="M796.0 515.7L827.0 518.7" stroke="#00f000" stroke-width="2.8" stroke-linecap="round"/>
<path d="M830.4 518.0L855.8 520.0" stroke="#f00000" stroke-width="2.4" stroke-linecap="round"/>
<path d="M820.4 502.4L825.8 516.4" stroke="#000060" stroke-width="2.2" stroke-linecap="round"/>
<path d="M824.4 504.4L827.8 513.7" stroke="#600000" stroke-width="2.2" stroke-linecap="round"/>
<path d="M829.4 519.0L830.0 492.3" stroke="#0000f0" stroke-width="2.2" stroke-linecap="round"/>
<path d="M829.8 519.0L833.8 493.7" stroke="#0000f0" stroke-width="2.2" stroke-linecap="round"/>
<path d="M823.8 529.7L821.4 543.0" stroke="#00f000" stroke-width="2.6" stroke-linecap="round"/>
<path d="M794.0 645.4L825.0 648.4" stroke="#00f000" stroke-width="2.8" stroke-linecap="round"/>
<path d="M820.4 629.4L823.8 645.7" stroke="#600000" stroke-width="2.2" stroke-linecap="round"/>
<path d="M824.4 633.0L824.4 641.0" stroke="#f020a0" stroke-width="2.4" stroke-linecap="round"/>
<path d="M825.4 648.0L829.4 624.4" stroke="#0000f0" stroke-width="2.8" stroke-linecap="round"/>
<text x="826" y="529" font-family="Liberation Sans, sans-serif" font-size="11.200" fill="#f4f4f4" text-anchor="middle">camera1_image</text>
<text x="826" y="529" font-family="Liberation Sans, sans-serif" font-size="11.200" fill="#f4f4f4" text-anchor="middle">camera1_points</text>
<text x="826" y="529" font-family="Liberation Sans, sans-serif" font-size="11.200" fill="#f4f4f4" text-anchor="middle">laser1</text>
<text x="825" y="659" font-family="Liberation Sans, sans-serif" font-size="11.200" fill="#f4f4f4" text-anchor="middle">base_footprint</text>
<text x="825" y="659" font-family="Liberation Sans, sans-serif" font-size="11.200" fill="#f4f4f4" text-anchor="middle">base_link</text>
<text x="825" y="659" font-family="Liberation Sans, sans-serif" font-size="11.200" fill="#f4f4f4" text-anchor="middle">odom</text>
<text x="825" y="659" font-family="Liberation Sans, sans-serif" font-size="11.200" fill="#f4f4f4" text-anchor="middle">map</text>
</svg>
<!-- VIEW3D-END -->
<!-- IMAGEPANEL-START -->
<svg width="0" height="0" style="position:absolute"><defs>
<linearGradient id="deskg" x1="0" y1="0" x2="1" y2="0"><stop offset="0" stop-color="#a9a9a9"/><stop offset="0.3" stop-color="#8e8e8e"/><stop offset="0.72" stop-color="#9a9a9a"/><stop offset="0.9" stop-color="#d0d0d0"/><stop offset="0.94" stop-color="#9c9c9c"/><stop offset="1" stop-color="#a4a4a4"/></linearGradient>
<linearGradient id="ringg" x1="0" y1="0" x2="1" y2="0"><stop offset="0" stop-color="#857560"/><stop offset="0.5" stop-color="#8f7e68"/><stop offset="0.8" stop-color="#b39a7c"/><stop offset="1" stop-color="#8a7862"/></linearGradient>
<symbol id="camscene" viewBox="0 0 502 378" preserveAspectRatio="none">
<rect width="502" height="378" fill="#b3b3b3"/>
<rect y="199.0" width="502" height="179.0" fill="#a1a1a1"/>
<polygon points="0,141 30,146 30,220 0,225" fill="#004f9f"/>
<polygon points="135.2,109.9 169.8,109.9 178.5,118.0 194.1,125.8 218.4,131.5 246.2,133.3 272.2,132.2 296.5,128.8 315.5,122.4 327.7,114.5 334.6,109.9 369.0,109.9 369.0,118.0 353.7,125.0 339.8,129.3 319.0,134.5 296.5,138.5 270.4,140.9 253.1,141.6 235.8,141.3 208.0,138.8 183.7,135.4 166.4,131.0 149.0,125.0 135.2,118.0" fill="url(#ringg)"/>
<rect x="244.9" y="146.1" width="14.2" height="4.5" fill="#909090"/>
<polygon points="149.0,175.3 154.2,174.9 154.2,185.7 343.3,185.7 350.2,184.8 350.2,174.9 354.6,175.3 354.6,207.3 343.3,207.9 331.1,205.6 287.8,203.0 218.4,203.0 171.6,205.6 162.9,207.3 149.9,207.9" fill="url(#deskg)"/>
<polygon points="154.2,176.1 201.1,177.0 201.1,184.8 154.2,184.8" fill="#bdbdbd"/>
<polygon points="304.3,177.0 350.2,176.1 350.2,184.8 304.3,184.8" fill="#c4c4c4"/>
<polygon points="149.0,174.9 183.7,175.9 201.1,177.0 201.1,178.0 154.2,176.3 149.0,175.9" fill="#8f7a60"/>
<polygon points="304.3,176.6 322.5,175.9 354.6,174.9 354.6,175.9 322.5,177.3 304.3,178.0" fill="#8f7a60"/>
<polygon points="154.2,184.8 350.2,184.4 350.2,185.8 287.8,186.7 218.4,186.7 154.2,186.0" fill="#8a7760"/>
<rect x="234.9" y="177.5" width="36.4" height="1.0" fill="#8f7a60"/>
<rect x="234.9" y="178.5" width="36.4" height="6.6" fill="#a8a8a8"/>
<rect x="243.0" y="171.8" width="3.1" height="5.9" fill="#9a9a9a"/>
<rect x="250.3" y="171.8" width="3.1" height="5.9" fill="#9a9a9a"/>
<rect x="258.0" y="171.8" width="3.1" height="5.9" fill="#9a9a9a"/>
<rect x="236.6" y="180.1" width="5.9" height="4.5" fill="#1c1c1c"/>
<rect x="250.3" y="180.1" width="7.6" height="1.7" fill="#2a6aa8"/>
<rect x="250.3" y="181.8" width="7.6" height="1.6" fill="#2e8a4a"/>
<rect x="250.3" y="183.4" width="7.6" height="1.4" fill="#c8602a"/>
<rect x="262.6" y="181.0" width="3.1" height="3.8" fill="#4a96c8"/>
<polygon points="162.0,177.0 183.7,178.4 183.7,180.5 162.0,179.6" fill="#2a5fa0"/>
<polygon points="162.0,179.6 183.7,180.5 183.7,182.5 162.0,181.7" fill="#2e8a4a"/>
<polygon points="162.0,181.7 183.7,182.5 183.7,184.3 162.0,183.9" fill="#b8552a"/>
<rect x="183.2" y="169.2" width="15.3" height="11.8" fill="#1a2a38"/>
<rect x="184.2" y="170.4" width="13.5" height="9.7" fill="#3f86b0"/>
<rect x="186.0" y="174.4" width="5.2" height="4.9" fill="#d8d8d8"/>
<rect x="186.7" y="181.0" width="12.1" height="2.4" fill="#151515"/>
<rect x="307.2" y="169.2" width="13.5" height="11.8" fill="#1a2a38"/>
<rect x="308.3" y="170.4" width="11.8" height="9.7" fill="#3f86b0"/>
<rect x="310.0" y="174.4" width="5.2" height="4.9" fill="#d8d8d8"/>
<rect x="310.7" y="181.0" width="12.1" height="2.4" fill="#151515"/>
<path d="M333.7 178.2L331.1 180.8L333.2 183.6" stroke="#151515" stroke-width="1" fill="none"/>
<path d="M223.6 178.7 Q224.0 177.7 227.1 177.7 L233.2 178.2 Q234.5 178.7 234.0 182.2 L233.2 193.5 L222.7 193.5 Z" fill="#1d1d1d"/>
<rect x="216.7" y="189.6" width="18.2" height="1.7" fill="#1d1d1d"/>
<rect x="219.3" y="191.4" width="13.9" height="3.8" fill="#1d1d1d"/>
<rect x="224.3" y="195.2" width="2.4" height="6.9" fill="#1d1d1d"/>
<rect x="217.5" y="201.8" width="16.0" height="1.7" fill="#1d1d1d"/>
<rect x="217.5" y="203.0" width="2.4" height="2.8" fill="#1d1d1d"/>
<rect x="230.6" y="203.0" width="2.4" height="2.8" fill="#1d1d1d"/>
<path d="M277.4 178.7 Q277.7 177.7 280.8 177.7 L286.9 178.2 Q288.3 178.7 287.8 182.2 L286.9 193.5 L276.5 193.5 Z" fill="#1d1d1d"/>
<rect x="270.4" y="189.6" width="18.2" height="1.7" fill="#1d1d1d"/>
<rect x="273.0" y="191.4" width="13.9" height="3.8" fill="#1d1d1d"/>
<rect x="278.1" y="195.2" width="2.4" height="6.9" fill="#1d1d1d"/>
<rect x="271.3" y="201.8" width="16.0" height="1.7" fill="#1d1d1d"/>
<rect x="271.3" y="203.0" width="2.4" height="2.8" fill="#1d1d1d"/>
<rect x="284.3" y="203.0" width="2.4" height="2.8" fill="#1d1d1d"/>
</symbol>
</defs></svg>
<div class="abs" style="left:1343px;top:97px;width:502px;height:22px;background:#b9b9b9">
  <svg class="abs" style="left:4.500px;top:4px" width="16" height="16" viewBox="0 0 16 16"><defs><linearGradient id="sky" x1="0" y1="0" x2="0" y2="1"><stop offset="0" stop-color="#3b5a92"/><stop offset="0.75" stop-color="#b4c8de"/><stop offset="0.76" stop-color="#2e4470"/><stop offset="1" stop-color="#4a6aa0"/></linearGradient></defs><rect x="0.500" y="0.500" width="14.600" height="14.600" rx="1.500" fill="#fdfdfd" stroke="#8a8a84" stroke-width="0.800"/><rect x="2.200" y="2.200" width="11.200" height="11.200" rx="0.800" fill="url(#sky)" stroke="#2a3c66" stroke-width="0.600"/><circle cx="6" cy="5.600" r="1.700" fill="#fbfbd8"/><path d="M9.500 11L11.200 7.400L12.600 11Z" fill="#5a5a5a"/></svg>
  <div class="abs" style="left:26px;top:2px;font-size:15px;line-height:19px;color:#111">Image</div>
  <div class="abs" style="left:484px;top:2px;width:18px;height:17px;background:#fafafa;border:1px solid #a8a8a8;border-radius:3px"></div>
  <svg class="abs" style="left:487px;top:5px" width="11" height="11" viewBox="0 0 11 11"><circle cx="5.500" cy="5.500" r="5.200" fill="#d0152a"/><path d="M3.500 3.500 L7.500 7.500 M7.500 3.500 L3.500 7.500" stroke="#fff" stroke-width="1.500"/></svg>
</div>
<div class="abs" style="left:1343px;top:119px;width:502px;height:836px;background:#000"></div>
<svg class="abs" style="left:1343px;top:348px" width="502" height="378"><use href="#camscene" x="0" y="0" width="502" height="378"/></svg>
<!-- splitter handle -->
<div class="abs" style="left:1326px;top:521px;width:0;height:0;border-top:4px solid transparent;border-bottom:4px solid transparent;border-left:4px solid #444"></div>
<div class="abs" style="left:1336px;top:505px;width:1px;height:40px;background:repeating-linear-gradient(#bbb 0 1px,transparent 1px 4px)"></div>
<!-- IMAGEPANEL-END -->
<!-- TIMEPANEL-START -->
<div class="abs" style="left:0;top:961px;width:1845px;height:21px;background:#b9b9b9"></div>
<div class="abs" style="left:1826px;top:963px;width:18px;height:17px;background:#fafafa;border:1px solid #a8a8a8;border-radius:3px"></div>
<svg class="abs" style="left:1829px;top:966px" width="11" height="11" viewBox="0 0 11 11"><circle cx="5.500" cy="5.500" r="5.200" fill="#d0152a"/><path d="M3.500 3.500 L7.500 7.500 M7.500 3.500 L3.500 7.500" stroke="#fff" stroke-width="1.500"/></svg>
<div class="abs fld" style="left:800px;width:295px"></div>
<div class="abs tl" style="left:1101px">Wall Time:</div>
<div class="abs fld" style="left:1178px;width:278px">1664277583.44</div>
<div class="abs tl" style="left:1462px">Wall Elapsed:</div>
<div class="abs fld" style="left:1558px;width:278px">64.88</div>
<div class="abs" style="left:1745px;top:1025px;width:100px;text-align:right;font-size:15px;line-height:19px;color:#111;white-space:pre">31 fps</div>
<!-- TIMEPANEL-END -->
<!-- MVSIM-START -->
<div class="abs" style="left:0;top:419px;width:8px;height:500px;background:#fff"></div>
<div class="abs" style="left:0;top:919px;width:8px;height:1px;background:#c8c8c8"></div>
<div id="mvsim" class="abs" style="left:6px;top:419px;width:937px;height:629px;background:#a3a3a3;border-radius:7px 7px 0 0;box-shadow:0 0 14px 2px rgba(0,0,0,0.55),0 0 2px rgba(0,0,0,0.6);overflow:hidden">
<div class="abs" style="left:0;top:0;width:937px;height:36px;background:#2f2e2e;border-bottom:1px solid #1e1e1e"></div>
<div class="abs" style="left:0;top:9px;width:937px;text-align:center;font-weight:bold;font-size:15px;line-height:18px;color:#f4f4f4;transform:scaleX(0.89)">mvsim</div>
<div class="abs" style="left:846px;top:20px;width:9px;height:1px;background:#e8e8e8"></div>
<div class="abs" style="left:880px;top:12.500px;width:9px;height:9px;border:1.300px solid #e8e8e8"></div>
<svg class="abs" style="left:908px;top:7px" width="22" height="22" viewBox="0 0 22 22"><circle cx="11" cy="11" r="10" fill="#e95420"/><path d="M7.200 7.200 L14.800 14.800 M14.800 7.200 L7.200 14.800" stroke="#fff" stroke-width="1.600"/></svg>
<svg class="abs" style="left:0;top:36px" width="937" height="593" viewBox="0 36 937 593">
<defs><linearGradient id="mdesk" x1="0" y1="0" x2="0" y2="1"><stop offset="0" stop-color="#a6a6a6"/><stop offset="1" stop-color="#9a9a9a"/></linearGradient><filter id="tex" x="0" y="0" width="100%" height="100%" color-interpolation-filters="sRGB"><feTurbulence type="fractalNoise" baseFrequency="0.55" numOctaves="1" seed="5" result="n"/><feColorMatrix in="n" type="matrix" values="0 0 0 0 0.15  0 0 0 0 0.13  0 0 0 0 0.12  0 0 0 -3.2 1.8" result="a0"/><feComponentTransfer in="a0" result="a"><feFuncA type="linear" slope="0.38"/></feComponentTransfer><feComposite in="a" in2="SourceGraphic" operator="in" result="d"/><feMerge><feMergeNode in="SourceGraphic"/><feMergeNode in="d"/></feMerge></filter></defs>
<rect x="0" y="36" width="937" height="593" fill="#a3a3a3"/>
<polygon points="0.0,36.0 937.0,36.0 937.0,161.5 189.0,140.5 0.0,135.0" fill="#4e4d54"/>
<polygon points="76.0,175.0 144.0,161.0 199.0,153.0 203.0,241.0 194.0,249.0 84.0,265.0" fill="#004f9f"/>
<path d="M199 199.39999999999998L342.4 166.39999999999998" stroke="#e03a3a" stroke-width="1.2"/>
<g filter="url(#tex)">
<polygon points="308.8,53.8 362.3,49.2 416.9,46.2 521.6,45.1 589.9,47.4 630.9,51.9 687.8,56.0 687.8,72.4 622.9,72.4 621.8,61.5 589.9,59.9 521.6,58.8 453.3,60.6 385.1,64.5 308.8,67.9" fill="#917e67"/>
<rect x="513.5" y="68.7" width="29.6" height="11.8" fill="#8e8e94"/>
<path d="M515.6 58.1V68.7M541.0 58.1V68.7" stroke="#8e8e94" stroke-width="0.8"/>
<polygon points="334.7,145.6 345.2,155.3 393.9,151.1 486.9,146.9 489.0,130.0 571.5,130.0 571.5,146.9 590.5,149.0 590.5,180.7 512.3,178.6 427.7,182.8 385.4,190.4 336.8,199.7" fill="url(#mdesk)"/>
</g>
<polygon points="308.8,53.8 362.3,49.2 416.9,46.2 521.6,45.1 589.9,47.4 630.9,51.9 687.8,56.0 687.8,59.7 630.9,57.4 589.9,51.5 521.6,48.7 416.9,49.7 362.3,51.7 308.8,54.2" fill="#d9bd98"/>
<polygon points="334.7,145.6 393.9,135.5 427.7,137.2 427.7,146.9 393.9,149.8 355.8,158.3 345.2,155.8" fill="#c9ad88"/>
<polygon points="345.2,158.3 393.9,149.8 486.9,145.6 590.5,146.9 590.5,152.4 486.9,152.4 393.9,158.3 351.6,165.1" fill="#bfa582"/>
<polygon points="487.7,130.0 572.3,130.0 572.3,146.9 487.7,146.9" fill="#8a8a8a"/>
<polygon points="487.7,128.7 572.3,128.7 572.3,132.9 487.7,132.9" fill="#c4a985"/>
<rect x="510.2" y="120.2" width="8.5" height="9.3" fill="#9c9ca0"/>
<rect x="527.1" y="120.2" width="8.5" height="9.3" fill="#9c9ca0"/>
<rect x="541.0" y="120.2" width="8.5" height="9.3" fill="#9c9ca0"/>
<rect x="496.2" y="135.5" width="12.7" height="11.0" fill="#1a1a1a"/>
<rect x="521.6" y="135.5" width="16.9" height="3.8" fill="#2a66a8"/>
<rect x="521.6" y="139.3" width="16.9" height="3.8" fill="#2e8a4a"/>
<rect x="521.6" y="143.1" width="16.9" height="3.8" fill="#c8602a"/>
<polygon points="356.7,146.9 393.9,143.1 398.1,148.1 360.0,152.4" fill="#2a5fa0"/>
<polygon points="356.7,151.1 398.1,147.7 398.1,152.4 360.0,155.8" fill="#2e8a4a"/>
<polygon points="356.7,154.9 398.1,152.0 396.0,155.8 362.2,159.6" fill="#c8602a"/>
<rect x="393.9" y="123.6" width="27.9" height="22.0" fill="#182430"/>
<rect x="395.6" y="125.3" width="24.5" height="18.6" fill="#3f86b0"/>
<rect x="398.1" y="132.9" width="11.8" height="10.1" fill="#c8c8c8"/>
<rect x="421.8" y="132.9" width="4.2" height="12.7" fill="#8d7b66"/>
<polygon points="402.3,146.9 425.6,146.0 429.8,149.8 406.6,152.4" fill="#151515"/>
<path d="M461.5 146.0 Q462.8 142.6 472.1 142.6 L481.4 144.3 Q484.8 146.9 483.9 159.6 L481.4 175.6 L457.3 175.6 L460.3 163.8 Z" fill="#1b1b1b"/>
<rect x="451.0" y="162.9" width="12.7" height="3.4" fill="#1b1b1b"/>
<rect x="467.0" y="175.6" width="4.2" height="11.8" fill="#1b1b1b"/>
<rect x="453.1" y="184.9" width="31.7" height="3.8" fill="#1b1b1b"/>
<rect x="453.1" y="187.5" width="5.1" height="5.1" fill="#1b1b1b"/>
<rect x="478.9" y="187.5" width="5.1" height="5.1" fill="#1b1b1b"/>
<rect x="466.2" y="188.3" width="5.1" height="5.1" fill="#1b1b1b"/>
<path d="M558.8 148.1 Q560.0 144.8 569.3 144.8 L578.7 146.5 Q582.0 149.0 581.2 161.7 L578.7 177.7 L554.5 177.7 L557.5 165.9 Z" fill="#1b1b1b"/>
<rect x="548.2" y="165.1" width="12.7" height="3.4" fill="#1b1b1b"/>
<rect x="564.3" y="177.7" width="4.2" height="11.8" fill="#1b1b1b"/>
<rect x="550.3" y="187.0" width="31.7" height="3.8" fill="#1b1b1b"/>
<rect x="550.3" y="189.6" width="5.1" height="5.1" fill="#1b1b1b"/>
<rect x="576.1" y="189.6" width="5.1" height="5.1" fill="#1b1b1b"/>
<rect x="563.4" y="190.4" width="5.1" height="5.1" fill="#1b1b1b"/>
<polygon points="244.2,350.6 336.6,357.1 339.5,409.1 246.2,398.1" fill="#820000"/>
<polygon points="336.6,357.1 360.9,334.1 361.6,372.1 347.0,399.4 339.5,409.1" fill="#8e0000"/>
<polygon points="244.2,350.6 274.2,328.5 292.4,325.2 340.5,327.2 349.6,327.8 360.9,334.1 336.6,357.1" fill="#ff0000"/>
<rect x="344.1" y="362.7" width="20.6" height="38.0" rx="9" ry="13" fill="#1c1c1c"/>
<path d="M349.6 355.1V363.6" stroke="#1818c0" stroke-width="1.2"/>
<path d="M228.9 372.4h5M238.0 373.4h7" stroke="#10e010" stroke-width="1.2"/>
<path d="M244.9 381.2v4" stroke="#181818" stroke-width="1.2"/>
<polygon points="314.5,322.4 317.1,320.0 324.9,319.4 326.8,322.4 324.9,328.1 315.1,328.6" fill="#120630"/>
<polygon points="316.4,320.0 316.8,315.1 315.8,312.9 321.6,312.0 322.3,315.1 322.3,319.8" fill="#0a0a0a"/>
<path d="M316.7 314.3h4" stroke="#e02020" stroke-width="1"/>
</svg>
<div class="abs" style="left:0;top:36px;width:266px;height:73px;background:rgba(43,43,43,0.96);border-radius:3px;box-shadow:0 2px 8px rgba(0,0,0,0.5)"></div>
<div class="abs" style="left:3px;top:40px;width:261px;height:28px;background:linear-gradient(#474747,#393939);border:1px solid #1d1d1d;border-radius:3px;box-shadow:inset 0 1px 0 rgba(255,255,255,0.12);"></div>
<div class="abs nb" style="left:3px;top:43.500px;width:261px;text-align:center;font-size:18px;line-height:20px;transform:scaleX(0.9)">Status</div>
<svg class="abs" style="left:246px;top:48px" width="8" height="10" viewBox="0 0 8 10"><path d="M2 1.500L6 5L2 8.500" fill="none" stroke="#d0d0d0" stroke-width="1.400"/></svg>
<div class="abs" style="left:7.4px;top:74.5px;width:38.4px;height:28.400px;background:linear-gradient(#474747,#393939);border:1px solid #1d1d1d;border-radius:3px;box-shadow:inset 0 1px 0 rgba(255,255,255,0.12);"></div>
<div class="abs" style="left:50.8px;top:74.5px;width:37.7px;height:28.400px;background:linear-gradient(#474747,#393939);border:1px solid #1d1d1d;border-radius:3px;box-shadow:inset 0 1px 0 rgba(255,255,255,0.12);"></div>
<div class="abs" style="left:93.5px;top:74.5px;width:59.2px;height:28.400px;background:linear-gradient(#474747,#393939);border:1px solid #1d1d1d;border-radius:3px;box-shadow:inset 0 1px 0 rgba(255,255,255,0.12);"></div>
<div class="abs" style="left:157.7px;top:74.5px;width:58.3px;height:28.400px;background:linear-gradient(#474747,#393939);border:1px solid #1d1d1d;border-radius:3px;box-shadow:inset 0 1px 0 rgba(255,255,255,0.12);"></div>
<div class="abs" style="left:221.8px;top:74.5px;width:37.7px;height:28.400px;background:linear-gradient(#474747,#393939);border:1px solid #1d1d1d;border-radius:3px;box-shadow:inset 0 1px 0 rgba(255,255,255,0.12);"></div>
<svg class="abs" style="left:20.5px;top:82px" width="12" height="13" viewBox="0 0 12 13"><path d="M6 1V8.500" stroke="#c8c8c8" stroke-width="1.200"/><path d="M0.500 11.500H11.500" stroke="#c8c8c8" stroke-width="1.300"/><path d="M3.500 6.500L6 9L8.500 6.500" fill="none" stroke="#c8c8c8" stroke-width="1.100"/></svg>
<svg class="abs" style="left:61.5px;top:82px" width="16" height="13" viewBox="0 0 16 13"><rect x="0.800" y="1" width="14.400" height="11" rx="1" fill="none" stroke="#c8c8c8" stroke-width="1.300"/><path d="M1 4H15" stroke="#c8c8c8" stroke-width="1.300"/></svg>
<svg class="abs" style="left:100px;top:82px" width="12" height="13" viewBox="0 0 12 13"><path d="M6 1V8.500" stroke="#c8c8c8" stroke-width="1.200"/><path d="M0.500 11.500H11.500" stroke="#c8c8c8" stroke-width="1.300"/><path d="M3.500 6.500L6 9L8.500 6.500" fill="none" stroke="#c8c8c8" stroke-width="1.100"/></svg>
<div class="abs nb" style="left:121.500px;top:78px;font-size:18px;line-height:20px;transform:scaleX(0.87);transform-origin:0 0">All</div>
<svg class="abs" style="left:165.5px;top:82px" width="16" height="13" viewBox="0 0 16 13"><rect x="0.800" y="1" width="14.400" height="11" rx="1" fill="none" stroke="#c8c8c8" stroke-width="1.300"/><path d="M1 4H15" stroke="#c8c8c8" stroke-width="1.300"/></svg>
<div class="abs nb" style="left:185.500px;top:78px;font-size:18px;line-height:20px;transform:scaleX(0.87);transform-origin:0 0">All</div>
<svg class="abs" style="left:232.500px;top:81px" width="16" height="16" viewBox="0 0 16 16"><circle cx="8" cy="8" r="6.800" fill="none" stroke="#d0d0d0" stroke-width="1.100"/><path d="M9 5.500L6.500 8L9 10.500" fill="none" stroke="#d0d0d0" stroke-width="1.100"/></svg>
<div class="abs" style="left:0;top:116px;width:188px;height:214px;background:rgba(50,50,50,0.93);border-radius:3px;box-shadow:0 2px 8px rgba(0,0,0,0.5)"></div>
<div class="abs" style="left:0;top:116px;width:188px;height:28px;background:linear-gradient(#4a4a4a,#3c3c3c);border-bottom:1px solid #222;border-radius:3px 3px 0 0"></div>
<div class="abs nb" style="left:0;top:120px;width:187px;text-align:center;font-size:16px;line-height:20px;transform:scaleX(0.91)">Control</div>
<div class="abs" style="left:161px;top:119.500px;width:21.500px;height:20px;background:linear-gradient(#474747,#393939);border:1px solid #1d1d1d;border-radius:3px;box-shadow:inset 0 1px 0 rgba(255,255,255,0.12);"></div>
<div class="abs" style="left:168.500px;top:129px;width:6px;height:1.500px;background:#c8c8c8"></div>
<div class="abs" style="left:6.700px;top:149.600px;width:176px;height:27.800px;background:linear-gradient(#474747,#393939);border:1px solid #1d1d1d;border-radius:3px;box-shadow:inset 0 1px 0 rgba(255,255,255,0.12);"></div>
<svg class="abs" style="left:70px;top:158px" width="12" height="11" viewBox="0 0 12 11"><path d="M0.500 5.500L6 0.500V3.500H11.500V7.500H6V10.500Z" fill="#e0e0e0"/></svg>
<div class="abs nb" style="left:87px;top:153.500px;font-size:18px;line-height:20px;transform:scaleX(0.9);transform-origin:0 0">Quit</div>
<div class="abs nt" style="left:6.500px;top:177px">Camera follows:</div>
<div class="abs" style="left:6.700px;top:195.700px;width:176px;height:28px;background:linear-gradient(#474747,#393939);border:1px solid #1d1d1d;border-radius:3px;box-shadow:inset 0 1px 0 rgba(255,255,255,0.12);"></div>
<div class="abs nb" style="left:6.700px;top:199px;width:176px;text-align:center;font-size:18px;line-height:21px;transform:scaleX(0.88)">[none]</div>
<svg class="abs" style="left:165px;top:204px" width="8" height="10" viewBox="0 0 8 10"><path d="M2 1.500L5.500 5L2 8.500" fill="none" stroke="#d0d0d0" stroke-width="1.300"/></svg>
<div class="abs" style="left:7.400px;top:225px;width:17.600px;height:17.600px;background:linear-gradient(#2c2c2c,#3a3a3a);border:1px solid #242424;border-radius:3px;box-shadow:inset 0 1px 2px rgba(0,0,0,0.4)"></div>
<div class="abs nt" style="left:31px;top:225.5px">Orthogonal view</div>
<div class="abs" style="left:7.400px;top:245px;width:17.600px;height:17.600px;background:linear-gradient(#2c2c2c,#3a3a3a);border:1px solid #242424;border-radius:3px;box-shadow:inset 0 1px 2px rgba(0,0,0,0.4)"></div>
<svg class="abs" style="left:9.500px;top:247px" width="14" height="14" viewBox="0 0 14 14"><path d="M2 7.500L5.500 11L12 2.500" fill="none" stroke="#f0f0f0" stroke-width="2"/></svg>
<div class="abs nt" style="left:31px;top:245.5px">View forces</div>
<div class="abs" style="left:7.400px;top:265px;width:17.600px;height:17.600px;background:linear-gradient(#2c2c2c,#3a3a3a);border:1px solid #242424;border-radius:3px;box-shadow:inset 0 1px 2px rgba(0,0,0,0.4)"></div>
<svg class="abs" style="left:9.500px;top:267px" width="14" height="14" viewBox="0 0 14 14"><path d="M2 7.500L5.500 11L12 2.500" fill="none" stroke="#f0f0f0" stroke-width="2"/></svg>
<div class="abs nt" style="left:31px;top:265.5px">View sensor pointclouds</div>
<div class="abs" style="left:7.400px;top:285px;width:17.600px;height:17.600px;background:linear-gradient(#2c2c2c,#3a3a3a);border:1px solid #242424;border-radius:3px;box-shadow:inset 0 1px 2px rgba(0,0,0,0.4)"></div>
<div class="abs nt" style="left:31px;top:285.5px">View sensor poses</div>
<div class="abs" style="left:7.400px;top:305px;width:17.600px;height:17.600px;background:linear-gradient(#2c2c2c,#3a3a3a);border:1px solid #242424;border-radius:3px;box-shadow:inset 0 1px 2px rgba(0,0,0,0.4)"></div>
<div class="abs nt" style="left:31px;top:305.5px">View sensor FOVs</div>
<div class="abs" style="left:0;top:396px;width:320px;height:240px;background:#383838;border-radius:3px 3px 0 0;box-shadow:0 2px 10px rgba(0,0,0,0.55);overflow:hidden">
<div class="abs" style="left:0;top:0;width:320px;height:28px;background:linear-gradient(#4a4a4a,#3c3c3c);border-bottom:1px solid #222;"></div>
<div class="abs nb" style="left:0;top:4px;width:320px;text-align:center;font-size:16px;line-height:20px;transform:scaleX(0.885)">Status</div>
<div class="abs" style="left:293px;top:3.800px;width:21.500px;height:20px;background:linear-gradient(#474747,#393939);border:1px solid #1d1d1d;border-radius:3px;box-shadow:inset 0 1px 0 rgba(255,255,255,0.12);"></div>
<div class="abs" style="left:300.500px;top:13.300px;width:6px;height:1.500px;background:#c8c8c8"></div>
<div class="abs nt" style="left:0.500px;top:29.5px;line-height:16px">Time: 01min 05.992s (CPU usage: 9.256%)</div>
<div class="abs nt" style="left:0.500px;top:45.5px;line-height:16px">Selected vehicle: 1/1</div>
<div class="abs nt" style="left:0.500px;top:61.5px;line-height:16px">gt. vel: [0.000000 0.000000 0.000000]odo vel: [0.000000 0.000000 0.000000]</div>
<div class="abs nt" style="left:0.500px;top:77.5px;line-height:16px">[Controller=twist_pid] Teleop keys:</div>
<div class="abs nt" style="left:0.500px;top:93.5px;line-height:16px">w/s=forward/backward.</div>
<div class="abs nt" style="left:0.500px;top:109.5px;line-height:16px">a/d=left/right.</div>
<div class="abs nt" style="left:0.500px;top:125.5px;line-height:16px">spacebar=stop.</div>
<div class="abs nt" style="left:0.500px;top:141.5px;line-height:16px">setpoint: lin=0.000 ang=0.000 deg/s</div>
<div class="abs nt" style="left:0.500px;top:157.5px;line-height:16px">Mouse: [116.041935 -5.530007 0.000000]</div>
</div>
<div class="abs" style="left:584px;top:106px;width:324px;height:272px;background:#3a3a3a;border:1px solid #2c2c2c;border-radius:3px;box-shadow:0 2px 10px rgba(0,0,0,0.55)"></div>
<div class="abs" style="left:584px;top:106px;width:324px;height:29.500px;background:linear-gradient(#4a4a4a,#3c3c3c);border-bottom:1px solid #222;border-radius:3px 3px 0 0"></div>
<div class="abs nb" style="left:584px;top:110.500px;width:324px;text-align:center;font-size:16px;line-height:20px;transform:scaleX(0.94)">r1/camera1_rgb</div>
<div class="abs" style="left:881px;top:110px;width:21.500px;height:19.500px;background:linear-gradient(#474747,#393939);border:1px solid #1d1d1d;border-radius:3px;box-shadow:inset 0 1px 0 rgba(255,255,255,0.12);"></div>
<div class="abs" style="left:888.500px;top:119.500px;width:6px;height:1.500px;background:#c8c8c8"></div>
<svg class="abs" style="left:586px;top:137px" width="319.500" height="239.600"><use href="#camscene" x="0" y="0" width="319.500" height="239.600"/></svg>
<div class="abs" style="left:565px;top:347.500px;width:323.500px;height:273px;background:#3a3a3a;border:1px solid #2c2c2c;border-radius:3px;box-shadow:0 2px 10px rgba(0,0,0,0.6)"></div>
<div class="abs" style="left:565px;top:347.500px;width:323.500px;height:29px;background:linear-gradient(#4a4a4a,#3c3c3c);border-bottom:1px solid #222;border-radius:3px 3px 0 0"></div>
<div class="abs nb" style="left:565px;top:351.500px;width:323.500px;text-align:center;font-size:16px;line-height:20px;transform:scaleX(0.933)">r1/camera1_depth</div>
<div class="abs" style="left:862.500px;top:350.500px;width:21px;height:20px;background:linear-gradient(#474747,#393939);border:1px solid #1d1d1d;border-radius:3px;box-shadow:inset 0 1px 0 rgba(255,255,255,0.12);"></div>
<div class="abs" style="left:870px;top:360px;width:6px;height:1.500px;background:#c8c8c8"></div>
<svg class="abs" style="left:566.600px;top:378.300px" width="320.400" height="240" viewBox="0 0 320.400 240">
<defs><linearGradient id="dg" x1="0" y1="0" x2="0" y2="1"><stop offset="0" stop-color="#ffffff"/><stop offset="0.04" stop-color="#f4f4f4"/><stop offset="0.1" stop-color="#c0c0c0"/><stop offset="0.2" stop-color="#7c7c7c"/><stop offset="0.35" stop-color="#484848"/><stop offset="0.55" stop-color="#2a2a2a"/><stop offset="1" stop-color="#151515"/></linearGradient>
<linearGradient id="dring" x1="0" y1="0" x2="0" y2="1"><stop offset="0" stop-color="#c8c8c8"/><stop offset="1" stop-color="#fafafa"/></linearGradient>
<linearGradient id="dwall" x1="0" y1="0" x2="1" y2="0"><stop offset="0" stop-color="#6e6e6e"/><stop offset="1" stop-color="#5a5a5a"/></linearGradient></defs>
<rect width="320.400" height="240" fill="#000"/>
<rect y="127.900" width="320.400" height="112.100" fill="url(#dg)"/>
<polygon points="0,89.600 19.700,92.500 19.700,139 0,143" fill="url(#dwall)"/>
<polygon points="85.9,69.7 107.9,69.7 116.7,76.4 134.4,82.0 160.2,84.1 187.3,82.0 204.9,76.4 212.2,69.7 235.2,69.7 235.2,72.6 216.6,80.2 187.3,86.7 160.2,89.1 134.4,86.7 105.0,80.8 85.9,73.5" fill="url(#dring)"/>
<rect x="155.8" y="92.3" width="8.8" height="3.2" fill="#f0f0f0"/>
<polygon points="94.7,111.4 116.7,110.8 116.7,107.3 125.5,107.3 125.5,116.1 140.2,117.6 143.2,112.6 154.3,112.6 154.3,108.8 166.1,108.8 166.1,112.6 178.4,112.6 181.4,117.6 195.5,116.1 195.5,107.3 204.3,107.3 204.3,110.8 226.0,110.8 226.0,130.8 94.7,130.8" fill="#e4e4e4"/>
</svg>
</div>
<!-- MVSIM-END -->
</body>
</html>
